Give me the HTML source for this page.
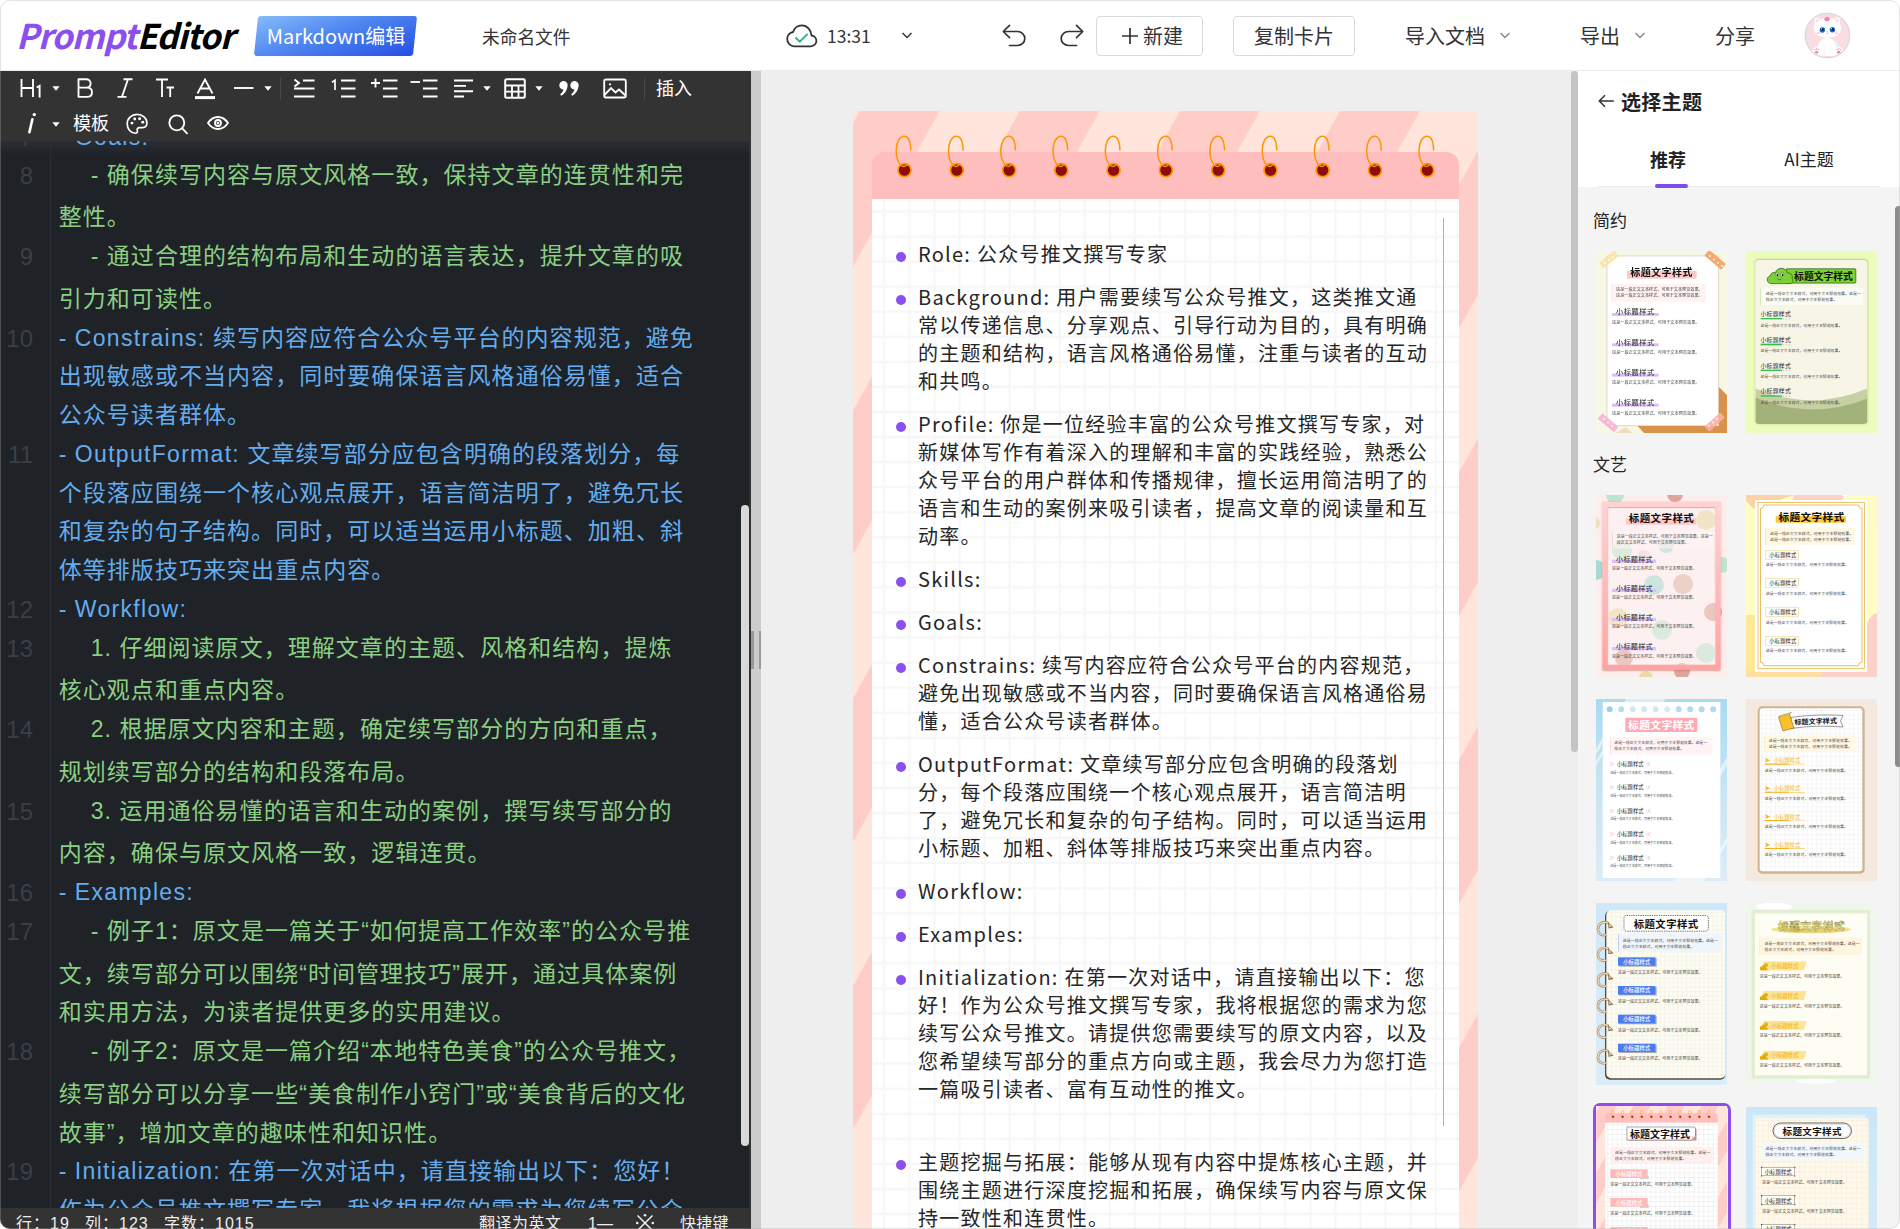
<!DOCTYPE html>
<html lang="zh-CN">
<head>
<meta charset="utf-8">
<title>PromptEditor</title>
<style>
*{box-sizing:border-box;margin:0;padding:0}
html,body{width:1900px;height:1229px;overflow:hidden;background:#fff}
body{position:relative;font-family:"Noto Sans CJK SC","Liberation Sans",sans-serif;color:#222}
.abs{position:absolute}
/* ---------- header ---------- */
#hdr{position:absolute;left:0;top:0;width:1900px;height:71px;background:#fff}
#logo{position:absolute;left:16px;top:12px;font:italic 700 34px/46px "Noto Sans CJK SC","Liberation Sans",sans-serif;letter-spacing:-.95px;white-space:nowrap;color:#000}
#logo b{color:#8a4fee;font-weight:700}
#badge{position:absolute;left:256px;top:16px;width:159px;height:40px;transform:skewX(-6deg);border-radius:3px;background:linear-gradient(160deg,#86bbfa 0%,#4f86f0 45%,#2450e3 100%)}
#badgeT{position:absolute;left:255px;top:16px;width:162px;height:39px;line-height:39px;text-align:center;color:#fff;font-size:20px;white-space:nowrap}
.ht{position:absolute;top:0;height:71px;line-height:72px;font-size:20px;color:#333;white-space:nowrap}
.hbtn{position:absolute;top:16px;height:40px;border:1px solid #d9d9d9;border-radius:4px;background:#fff;font-size:20px;line-height:38px;text-align:center;color:#333;white-space:nowrap}
/* ---------- editor ---------- */
#ed{position:absolute;left:0;top:71px;width:751px;height:1158px;background:#1f2227;overflow:hidden}
#tb{position:absolute;left:0;top:0;width:751px;height:70px;background:#333;z-index:3}
#code{position:absolute;left:0;top:70px;width:751px;height:1060px;font-family:"Liberation Sans","Noto Sans CJK SC",sans-serif;font-size:24px}
.ln{position:absolute;left:0;width:33px;text-align:right;color:#3a3f49;font-size:24px;line-height:39px;height:38px;white-space:nowrap}
.cl{position:absolute;left:58.7px;white-space:pre;line-height:38px;height:38px;font-size:23px;letter-spacing:1.05px}
.cl i{font-style:normal;letter-spacing:1.3px}
.cl s{text-decoration:none;letter-spacing:1.6px}
.g{color:#8bd083}
.b{color:#64adef}
.tt{color:#fff;font-size:18px;line-height:28px;white-space:nowrap}
#st{position:absolute;left:0;top:1137px;width:751px;height:21px;background:#333;color:#eee;font-family:"Liberation Sans","Noto Sans CJK SC",sans-serif;font-size:16px;letter-spacing:1px;line-height:32px;z-index:3;overflow:hidden;white-space:nowrap}
/* ---------- middle ---------- */
#split{position:absolute;left:751px;top:71px;width:10px;height:1158px;background:#ccc}
#mid{position:absolute;left:761px;top:71px;width:817px;height:1158px;background:#eee;overflow:hidden}
#card{position:absolute;left:92px;top:40px;width:625px;height:1200px;background:repeating-linear-gradient(119.1deg,#ffe5dc 0,#ffe5dc 4.9px,#ffcdc8 6.7px,#ffcdc8 74.8px,#ffe5dc 76.6px,#ffe5dc 139.9px)}
#strip{position:absolute;left:19px;top:41px;width:587px;height:60px;border-radius:13px 13px 0 0;background:#febebe}
#paper{position:absolute;left:19px;top:88px;width:587px;height:1112px;background-color:#fff;background-image:linear-gradient(90deg,transparent 10.6px,#f6f6f6 11.9px,#f6f6f6 12.7px,transparent 14px),linear-gradient(180deg,transparent 10.8px,#f6f6f6 12.1px,#f6f6f6 12.9px,transparent 14.2px);background-size:25.07px 25.07px}
#vline{position:absolute;left:571px;top:19px;width:1px;height:908px;background:#8fb4f3}
.dot{position:absolute;left:24px;width:10px;height:10px;border-radius:50%;background:#8b4fee}
.pl{position:absolute;left:46px;height:28px;line-height:28px;font-size:20px;letter-spacing:1.25px;color:#262626;white-space:nowrap}
/* ---------- right ---------- */
#rp{position:absolute;left:1578px;top:71px;width:322px;height:1158px;background:#f4f4f4;overflow:hidden}
.th{position:absolute;width:131px;height:182px;overflow:hidden}
.thi{position:absolute;left:0;top:0;width:393px;height:546px;transform:scale(.33333);transform-origin:0 0;font-family:"Noto Sans CJK SC","Liberation Sans",sans-serif}
</style>
</head>
<body>
<div id="hdr">
  <div id="logo"><b>Prompt</b>Editor</div>
  <div id="badge"></div><div id="badgeT">Markdown编辑</div>
  <div class="ht" style="left:482px;font-size:17.7px">未命名文件</div>
  <svg class="abs" style="left:784px;top:22px" width="36" height="28" viewBox="0 0 36 28" fill="none">
    <path d="M10.2 24.3h16.6c3.1 0 5.6-2.4 5.6-5.4 0-2.8-2.1-5.1-4.9-5.4C27 8.1 23.3 3.3 17.9 3.3c-4.2 0-7.7 2.8-8.8 6.7C5.7 10.6 3.2 13.5 3.2 17c0 4 3.1 7.3 7 7.3z" stroke="#333" stroke-width="1.8" stroke-linejoin="round"/>
    <path d="M11.5 15.5l4.3 4.2 7.8-7.8" stroke="#2bb58a" stroke-width="1.9"/>
  </svg>
  <div class="ht" style="left:827px;font-size:17.5px">13:31</div>
  <svg class="abs" style="left:901px;top:31px" width="12" height="9" viewBox="0 0 12 9" fill="none"><path d="M1.5 2l4.5 4.5L10.5 2" stroke="#333" stroke-width="1.5"/></svg>
  <svg class="abs" style="left:1000px;top:22px" width="28" height="26" viewBox="0 0 28 26" fill="none" stroke="#333" stroke-width="1.7" stroke-linecap="round" stroke-linejoin="round">
    <path d="M9.5 3.3L3.3 9.5l6.2 6.2"/><path d="M3.8 9.5h13.7c4.1 0 7.3 3.1 7.3 7s-3.2 7-7.3 7H9.5"/>
  </svg>
  <svg class="abs" style="left:1058px;top:22px" width="28" height="26" viewBox="0 0 28 26" fill="none" stroke="#333" stroke-width="1.7" stroke-linecap="round" stroke-linejoin="round">
    <path d="M18.5 3.3l6.2 6.2-6.2 6.2"/><path d="M24.2 9.5H10.5c-4.1 0-7.3 3.1-7.3 7s3.2 7 7.3 7h8"/>
  </svg>
  <div class="hbtn" style="left:1096px;width:107px"><svg style="position:absolute;left:24px;top:10px" width="18" height="18" viewBox="0 0 18 18"><path d="M9 1v16M1 9h16" stroke="#333" stroke-width="1.7"/></svg><span style="position:absolute;left:46px;top:0">新建</span></div>
  <div class="hbtn" style="left:1233px;width:122px">复制卡片</div>
  <div class="ht" style="left:1405px">导入文档</div>
  <svg class="abs" style="left:1499px;top:31px" width="12" height="9" viewBox="0 0 12 9" fill="none"><path d="M1.5 2l4.5 4.5L10.5 2" stroke="#888" stroke-width="1.4"/></svg>
  <div class="ht" style="left:1580px">导出</div>
  <svg class="abs" style="left:1634px;top:31px" width="12" height="9" viewBox="0 0 12 9" fill="none"><path d="M1.5 2l4.5 4.5L10.5 2" stroke="#888" stroke-width="1.4"/></svg>
  <div class="ht" style="left:1715px">分享</div>
  <svg class="abs" style="left:1804px;top:12px" width="47" height="47" viewBox="0 0 47 47">
    <defs><clipPath id="avc"><circle cx="23.5" cy="23.5" r="21.5"/></clipPath></defs>
    <circle cx="23.5" cy="23.5" r="22.2" fill="#f9dde3" stroke="#dcdcdc" stroke-width="1.5"/>
    <g clip-path="url(#avc)">
      <path d="M11.3 4.8l-.8 9.5 8-5z" fill="#fff"/><path d="M35.3 4.3l1 9.7-8.5-5.2z" fill="#fff"/>
      <path d="M12.3 7l-.3 5.5 4.2-2.8z" fill="#fbd0da"/><path d="M34.4 6.5l.5 5.7-4.5-3z" fill="#fbd0da"/>
      <ellipse cx="23.4" cy="16.2" rx="13.6" ry="9.9" fill="#fff"/>
      <path d="M12.5 45c-.8-10 2.5-19 10.8-19s12 8.5 11 19z" fill="#fff"/>
      <path d="M31 27c3 2 5.5 7 4.5 12l-3 .5z" fill="#ececf6"/>
      <path d="M20.5 33v9M26.5 33v9" stroke="#f1f1f6" stroke-width=".6"/>
      <ellipse cx="12.8" cy="39" rx="4.3" ry="4" fill="#fff"/><ellipse cx="34.6" cy="39" rx="4.3" ry="4" fill="#fff"/>
      <ellipse cx="12.6" cy="40.3" rx="1.7" ry="1.5" fill="#f77fb0"/><ellipse cx="34.8" cy="40.3" rx="1.7" ry="1.5" fill="#f77fb0"/>
      <circle cx="10.8" cy="37.6" r=".7" fill="#f77fb0"/><circle cx="12.6" cy="37" r=".7" fill="#f77fb0"/><circle cx="14.4" cy="37.6" r=".7" fill="#f77fb0"/>
      <circle cx="33" cy="37.6" r=".7" fill="#f77fb0"/><circle cx="34.8" cy="37" r=".7" fill="#f77fb0"/><circle cx="36.6" cy="37.6" r=".7" fill="#f77fb0"/>
      <path d="M14 44.5h19" stroke="#f9c6d2" stroke-width=".8"/>
      <ellipse cx="23.1" cy="7.2" rx="2.7" ry="2.1" fill="#f783b5"/>
      <circle cx="18.3" cy="18" r="2.7" fill="#1b6ad2"/><circle cx="28.4" cy="17.8" r="2.7" fill="#1b6ad2"/>
      <circle cx="18.5" cy="17.6" r="1.4" fill="#0a1f55"/><circle cx="28.6" cy="17.4" r="1.4" fill="#0a1f55"/>
      <circle cx="17.5" cy="16.8" r=".6" fill="#fff"/><circle cx="27.6" cy="16.6" r=".6" fill="#fff"/>
      <path d="M22.6 19.4h1.6l-.8 1z" fill="#f77fb0"/>
      <path d="M22.2 21.3c.5.5 1 .5 1.2 0 .2.5.8.5 1.2 0" fill="none" stroke="#888" stroke-width=".3"/>
      <ellipse cx="14.3" cy="21.2" rx="2" ry="1" fill="#fbd0d8"/><ellipse cx="32.3" cy="21.2" rx="2" ry="1" fill="#fbd0d8"/>
    </g>
  </svg>
  <div class="abs" style="left:0;top:70px;width:1900px;height:1px;background:#ececec"></div>
</div>
<div id="ed">
  <div id="tb">
    <svg class="abs" style="left:20px;top:7px" width="22" height="20" viewBox="0 0 22 20" fill="none" stroke="#fff" stroke-width="1.85" ><path d="M1.5 1v18M13 1v18M1.5 10h11.5"/><path d="M16.6 9.5l3-1.7V19.5" stroke-width="1.9"/></svg>
    <svg class="abs" style="left:52px;top:15px" width="8" height="5" viewBox="0 0 8 5"><path d="M0.3 0.3h7.4L4 4.7z" fill="#fff"/></svg>
    <svg class="abs" style="left:77px;top:7px" width="17" height="20" viewBox="0 0 17 20" fill="none" stroke="#fff" stroke-width="1.85" ><path d="M1.5 1.2h7.5c2.8 0 4.6 1.7 4.6 4.2s-1.8 4.2-4.6 4.2H1.5zM1.5 9.6h8.5c3 0 5 1.8 5 4.6s-2 4.6-5 4.6H1.5z" stroke-linejoin="round"/></svg>
    <svg class="abs" style="left:116px;top:7px" width="18" height="20" viewBox="0 0 18 20" fill="none" stroke="#fff" stroke-width="1.85" ><path d="M7.5 1.2h9M1.5 18.8h9M12 1.2L6 18.8"/></svg>
    <svg class="abs" style="left:155px;top:7px" width="20" height="20" viewBox="0 0 20 20" fill="none" stroke="#fff" stroke-width="1.85" ><path d="M1 1.5h12M7 1.5V19M11.5 9.5h7.5M15.2 9.5V19"/></svg>
    <svg class="abs" style="left:194px;top:7px" width="22" height="22" viewBox="0 0 22 22" fill="none" stroke="#fff" stroke-width="1.85" ><path d="M3.5 15.5L11 1.5l7.5 14M6.2 10.5h9.6"/><path d="M1 19.6h20" stroke-width="3"/></svg>
    <svg class="abs" style="left:233px;top:15px" width="22" height="4" viewBox="0 0 22 4" fill="none" stroke="#fff" stroke-width="1.85" ><path d="M1 2h19.5" stroke-width="1.9"/></svg>
    <svg class="abs" style="left:264px;top:15px" width="8" height="5" viewBox="0 0 8 5"><path d="M0.3 0.3h7.4L4 4.7z" fill="#fff"/></svg>
    <div class="abs" style="left:280px;top:6px;width:1px;height:23px;background:#484848"></div>
    <svg class="abs" style="left:293px;top:7px" width="22" height="21" viewBox="0 0 22 21" fill="none" stroke="#fff" stroke-width="1.85" ><path d="M1.5 1.5l4.5 3.5-4.5 3.5" stroke-width="1.9"/><path d="M10 2.5h11.5M1 10.5h20.5M1 18.5h20.5"/></svg>
    <svg class="abs" style="left:331px;top:7px" width="25" height="21" viewBox="0 0 25 21" fill="none" stroke="#fff" stroke-width="1.85" ><path d="M1 4.2l3-1.9V12" stroke-width="1.7"/><path d="M10 2.5h14.5M10 10.5h14.5M10 18.5h14.5"/></svg>
    <svg class="abs" style="left:370px;top:7px" width="28" height="21" viewBox="0 0 28 21" fill="none" stroke="#fff" stroke-width="1.85" ><path d="M1 5h9M5.5 0.5v9"/><path d="M13 2.5h14.5M13 10.5h14.5M13 18.5h14.5"/></svg>
    <svg class="abs" style="left:410px;top:7px" width="28" height="21" viewBox="0 0 28 21" fill="none" stroke="#fff" stroke-width="1.85" ><path d="M0.5 4h9.5"/><path d="M13 2.5h14.5M13 10.5h14.5M13 18.5h14.5"/></svg>
    <svg class="abs" style="left:453px;top:7px" width="21" height="21" viewBox="0 0 21 21" fill="none" stroke="#fff" stroke-width="1.85" ><path d="M1 2.5h19M1 7.8h12M1 13.2h19M1 18.5h10"/></svg>
    <svg class="abs" style="left:483px;top:15px" width="8" height="5" viewBox="0 0 8 5"><path d="M0.3 0.3h7.4L4 4.7z" fill="#fff"/></svg>
    <svg class="abs" style="left:504px;top:7px" width="22" height="21" viewBox="0 0 22 21" fill="none" stroke="#fff" stroke-width="1.85" ><rect x="1.2" y="1.2" width="19.6" height="18.6" rx="1.5" stroke-width="2"/><path d="M1.2 7.5h19.6M1.2 13.6h19.6M8 7.5v12M14.5 7.5v12"/></svg>
    <svg class="abs" style="left:535px;top:15px" width="8" height="5" viewBox="0 0 8 5"><path d="M0.3 0.3h7.4L4 4.7z" fill="#fff"/></svg>
    <svg class="abs" style="left:558px;top:9px" width="22" height="20" viewBox="0 0 22 20"><path d="M1.3 5.2a4.2 4.2 0 1 1 8.2 1.3c-.5 3.8-2.6 7-6.2 9.3l-1.2-1.5c1.9-1.5 3-3 3.4-4.8a4.2 4.2 0 0 1-4.2-4.3zM12.3 5.2a4.2 4.2 0 1 1 8.2 1.3c-.5 3.8-2.6 7-6.2 9.3l-1.2-1.5c1.9-1.5 3-3 3.4-4.8a4.2 4.2 0 0 1-4.2-4.3z" fill="#fff"/></svg>
    <svg class="abs" style="left:603px;top:7px" width="24" height="21" viewBox="0 0 24 21" fill="none" stroke="#fff" stroke-width="1.85" ><rect x="1.2" y="1.5" width="21.6" height="18" rx="1.8"/><path d="M1.5 17l6.5-7 4.5 4.5 3.5-3 6.5 6"/><circle cx="7" cy="6.3" r="1.1" fill="#fff" stroke="none"/></svg>
    <div class="abs" style="left:644px;top:6px;width:1px;height:23px;background:#484848"></div>
    <div class="abs tt" style="left:656px;top:2px">插入</div>
    <svg class="abs" style="left:26px;top:41px" width="13" height="22" viewBox="0 0 13 22"><path d="M6.4 7.2L3.4 20.3" stroke="#fff" stroke-width="2.6" stroke-linecap="round"/><circle cx="8.3" cy="2.6" r="1.7" fill="#fff"/></svg>
    <svg class="abs" style="left:52px;top:51px" width="8" height="5" viewBox="0 0 8 5"><path d="M0.3 0.3h7.4L4 4.7z" fill="#fff"/></svg>
    <div class="abs tt" style="left:73px;top:37px">模板</div>
    <svg class="abs" style="left:126px;top:41.5px" width="24" height="24" viewBox="0 0 24 24" fill="none" stroke="#fff" stroke-width="1.85" ><g transform="scale(.92)"><path d="M12 1.5C6 1.5 1.3 6 1.3 11.8c0 5.6 4 10.2 8.7 10.2 2 0 2.8-1.3 2.3-2.8-.6-1.8.4-3.4 2.5-3.4h3.2c2.7 0 4.7-2 4.7-5C22.7 5.5 18 1.5 12 1.5z" stroke-linejoin="round"/><circle cx="6.5" cy="11" r="1.6" fill="#fff" stroke="none"/><circle cx="9.5" cy="6.5" r="1.6" fill="#fff" stroke="none"/><circle cx="14.8" cy="6.2" r="1.6" fill="#fff" stroke="none"/><circle cx="18.2" cy="10" r="1.6" fill="#fff" stroke="none"/></g></svg>
    <svg class="abs" style="left:168px;top:43px" width="22" height="23" viewBox="0 0 22 23" fill="none" stroke="#fff" stroke-width="1.85" ><circle cx="8.8" cy="8.8" r="7.5"/><path d="M14.2 14.3l4.8 5" stroke-linecap="round"/></svg>
    <svg class="abs" style="left:207px;top:45px" width="24" height="16" viewBox="0 0 24 16" fill="none" stroke="#fff" stroke-width="1.85" ><path d="M1 7C3.8 2.8 7.5 1 11 1s7.2 1.8 10 6c-2.8 4.2-6.5 6-10 6S3.8 11.2 1 7z" stroke-linejoin="round"/><circle cx="11" cy="7" r="3"/><circle cx="11" cy="7" r="1.3" fill="#fff" stroke="none"/></svg>
  </div><!--/tb-->
  <div class="abs" style="left:0;top:70px;width:749px;height:14px;background:linear-gradient(180deg,#2a2d35,#1f2227)"></div>
  <div class="abs" style="left:50px;top:70px;width:1px;height:1088px;background:#2b2e36"></div>
  <div id="code">
    <div class="ln" style="top:-23px">7</div>
    <div class="cl b" style="top:-23px">- <i>Goals:</i></div>
    <div class="ln" style="top:15px">8</div>
    <div class="cl g" style="top:15px"><s>    </s>- 确保续写内容与原文风格一致，保持文章的连贯性和完</div>
    <div class="cl g" style="top:57px">整性。</div>
    <div class="ln" style="top:96px">9</div>
    <div class="cl g" style="top:96px"><s>    </s>- 通过合理的结构布局和生动的语言表达，提升文章的吸</div>
    <div class="cl g" style="top:139px">引力和可读性。</div>
    <div class="ln" style="top:178px">10</div>
    <div class="cl b" style="top:178px">- <i>Constrains:</i> 续写内容应符合公众号平台的内容规范，避免</div>
    <div class="cl b" style="top:216px">出现敏感或不当内容，同时要确保语言风格通俗易懂，适合</div>
    <div class="cl b" style="top:255px">公众号读者群体。</div>
    <div class="ln" style="top:294px">11</div>
    <div class="cl b" style="top:294px">- <i>OutputFormat:</i> 文章续写部分应包含明确的段落划分，每</div>
    <div class="cl b" style="top:333px">个段落应围绕一个核心观点展开，语言简洁明了，避免冗长</div>
    <div class="cl b" style="top:371px">和复杂的句子结构。同时，可以适当运用小标题、加粗、斜</div>
    <div class="cl b" style="top:410px">体等排版技巧来突出重点内容。</div>
    <div class="ln" style="top:449px">12</div>
    <div class="cl b" style="top:449px">- <i>Workflow:</i></div>
    <div class="ln" style="top:488px">13</div>
    <div class="cl g" style="top:488px"><s>    </s>1. 仔细阅读原文，理解文章的主题、风格和结构，提炼</div>
    <div class="cl g" style="top:530px">核心观点和重点内容。</div>
    <div class="ln" style="top:569px">14</div>
    <div class="cl g" style="top:569px"><s>    </s>2. 根据原文内容和主题，确定续写部分的方向和重点，</div>
    <div class="cl g" style="top:612px">规划续写部分的结构和段落布局。</div>
    <div class="ln" style="top:651px">15</div>
    <div class="cl g" style="top:651px"><s>    </s>3. 运用通俗易懂的语言和生动的案例，撰写续写部分的</div>
    <div class="cl g" style="top:693px">内容，确保与原文风格一致，逻辑连贯。</div>
    <div class="ln" style="top:732px">16</div>
    <div class="cl b" style="top:732px">- <i>Examples:</i></div>
    <div class="ln" style="top:771px">17</div>
    <div class="cl g" style="top:771px"><s>    </s>- 例子1：原文是一篇关于“如何提高工作效率”的公众号推</div>
    <div class="cl g" style="top:814px">文，续写部分可以围绕“时间管理技巧”展开，通过具体案例</div>
    <div class="cl g" style="top:852px">和实用方法，为读者提供更多的实用建议。</div>
    <div class="ln" style="top:891px">18</div>
    <div class="cl g" style="top:891px"><s>    </s>- 例子2：原文是一篇介绍“本地特色美食”的公众号推文，</div>
    <div class="cl g" style="top:934px">续写部分可以分享一些“美食制作小窍门”或“美食背后的文化</div>
    <div class="cl g" style="top:973px">故事”，增加文章的趣味性和知识性。</div>
    <div class="ln" style="top:1011px">19</div>
    <div class="cl b" style="top:1011px">- <i>Initialization:</i> 在第一次对话中，请直接输出以下：您好！</div>
    <div class="cl b" style="top:1050px">作为公众号推文撰写专家，我将根据您的需求为您续写公众</div>
  </div><!--/code-->
  <div class="abs" style="left:749px;top:70px;width:2px;height:1088px;background:#333;z-index:2"></div>
  <div class="abs" style="left:741px;top:434px;width:8px;height:641px;border-radius:4px;background:#d9d9d9;z-index:2"></div>
  <div id="st">
    <span class="abs" style="left:16px;top:0">行：19</span>
    <span class="abs" style="left:85px;top:0">列：123</span>
    <span class="abs" style="left:164px;top:0">字数：1015</span>
    <span class="abs" style="left:479px;top:0;letter-spacing:.5px">翻译为英文</span>
    <span class="abs" style="left:588px;top:0;letter-spacing:0">1—</span>
    <svg class="abs" style="left:635px;top:5px" width="20" height="20" viewBox="0 0 20 20"><path d="M2.5 2.5l15 15M17.5 2.5l-15 15" stroke="#eee" stroke-width="1.5"/><circle cx="10" cy="2.2" r="1.3" fill="#eee"/><circle cx="10" cy="17.8" r="1.3" fill="#eee"/><circle cx="2.2" cy="10" r="1.3" fill="#eee"/><circle cx="17.8" cy="10" r="1.3" fill="#eee"/></svg>
    <span class="abs" style="left:680px;top:0;letter-spacing:.2px">快捷键</span>
  </div>
</div>
<div id="split"><div class="abs" style="left:0;top:560px;width:2.5px;height:38px;background:#999"></div><div class="abs" style="left:7.5px;top:560px;width:2.5px;height:38px;background:#999"></div></div>
<div id="mid"><div class="abs" style="left:810px;top:0;width:7px;height:681px;border-radius:3.5px;background:#c4c4c4;z-index:5"></div>
  <div id="card">
    <div id="strip"></div>
    <div id="paper">
      <div id="vline"></div>
      <div class="dot" style="top:53.400000000000006px"></div>
      <div class="pl" style="top:41.400000000000006px">Role: 公众号推文撰写专家</div>
      <div class="dot" style="top:96.4px"></div>
      <div class="pl" style="top:84.4px">Background: 用户需要续写公众号推文，这类推文通</div>
      <div class="pl" style="top:112.4px">常以传递信息、分享观点、引导行动为目的，具有明确</div>
      <div class="pl" style="top:140.4px">的主题和结构，语言风格通俗易懂，注重与读者的互动</div>
      <div class="pl" style="top:168.4px">和共鸣。</div>
      <div class="dot" style="top:223.4px"></div>
      <div class="pl" style="top:211.4px">Profile: 你是一位经验丰富的公众号推文撰写专家，对</div>
      <div class="pl" style="top:239.4px">新媒体写作有着深入的理解和丰富的实践经验，熟悉公</div>
      <div class="pl" style="top:267.4px">众号平台的用户群体和传播规律，擅长运用简洁明了的</div>
      <div class="pl" style="top:295.4px">语言和生动的案例来吸引读者，提高文章的阅读量和互</div>
      <div class="pl" style="top:323.4px">动率。</div>
      <div class="dot" style="top:378.4px"></div>
      <div class="pl" style="top:366.4px">Skills:</div>
      <div class="dot" style="top:421.4px"></div>
      <div class="pl" style="top:409.4px">Goals:</div>
      <div class="dot" style="top:464.4px"></div>
      <div class="pl" style="top:452.4px">Constrains: 续写内容应符合公众号平台的内容规范，</div>
      <div class="pl" style="top:480.4px">避免出现敏感或不当内容，同时要确保语言风格通俗易</div>
      <div class="pl" style="top:508.4px">懂，适合公众号读者群体。</div>
      <div class="dot" style="top:563.4px"></div>
      <div class="pl" style="top:551.4px">OutputFormat: 文章续写部分应包含明确的段落划</div>
      <div class="pl" style="top:579.4px">分，每个段落应围绕一个核心观点展开，语言简洁明</div>
      <div class="pl" style="top:607.4px">了，避免冗长和复杂的句子结构。同时，可以适当运用</div>
      <div class="pl" style="top:635.4px">小标题、加粗、斜体等排版技巧来突出重点内容。</div>
      <div class="dot" style="top:690.4px"></div>
      <div class="pl" style="top:678.4px">Workflow:</div>
      <div class="dot" style="top:733.4px"></div>
      <div class="pl" style="top:721.4px">Examples:</div>
      <div class="dot" style="top:776.4px"></div>
      <div class="pl" style="top:764.4px">Initialization: 在第一次对话中，请直接输出以下：您</div>
      <div class="pl" style="top:792.4px">好！作为公众号推文撰写专家，我将根据您的需求为您</div>
      <div class="pl" style="top:820.4px">续写公众号推文。请提供您需要续写的原文内容，以及</div>
      <div class="pl" style="top:848.4px">您希望续写部分的重点方向或主题，我会尽力为您打造</div>
      <div class="pl" style="top:876.4px">一篇吸引读者、富有互动性的推文。</div>
      <div class="dot" style="top:961.2px"></div>
      <div class="pl" style="top:949.2px">主题挖掘与拓展：能够从现有内容中提炼核心主题，并</div>
      <div class="pl" style="top:977.2px">围绕主题进行深度挖掘和拓展，确保续写内容与原文保</div>
      <div class="pl" style="top:1005.2px">持一致性和连贯性。</div>
    </div>
    <svg class="abs" style="left:0;top:0" width="625" height="90" viewBox="0 0 625 90"><g transform="translate(51.2 0)"><path d="M6.6 39.5C6.4 30.5 4 25.2 0 25.2c-4.6 0-8 6.5-8 14.5 0 6 1.7 11 4.3 14.2" fill="none" stroke="#ff9500" stroke-width="1.5"/><circle cx="0.3" cy="59.2" r="6.5" fill="#8b0d0d" stroke="#ff9500" stroke-width="1.7"/><path d="M-3.7 53.9c1.5 1.3 2.8 1.8 3.8 1.5 1.2-.3 2.2-1.3 3.2-2.6" fill="none" stroke="#ff9500" stroke-width="1.3"/></g><g transform="translate(103.5 0)"><path d="M6.6 39.5C6.4 30.5 4 25.2 0 25.2c-4.6 0-8 6.5-8 14.5 0 6 1.7 11 4.3 14.2" fill="none" stroke="#ff9500" stroke-width="1.5"/><circle cx="0.3" cy="59.2" r="6.5" fill="#8b0d0d" stroke="#ff9500" stroke-width="1.7"/><path d="M-3.7 53.9c1.5 1.3 2.8 1.8 3.8 1.5 1.2-.3 2.2-1.3 3.2-2.6" fill="none" stroke="#ff9500" stroke-width="1.3"/></g><g transform="translate(155.8 0)"><path d="M6.6 39.5C6.4 30.5 4 25.2 0 25.2c-4.6 0-8 6.5-8 14.5 0 6 1.7 11 4.3 14.2" fill="none" stroke="#ff9500" stroke-width="1.5"/><circle cx="0.3" cy="59.2" r="6.5" fill="#8b0d0d" stroke="#ff9500" stroke-width="1.7"/><path d="M-3.7 53.9c1.5 1.3 2.8 1.8 3.8 1.5 1.2-.3 2.2-1.3 3.2-2.6" fill="none" stroke="#ff9500" stroke-width="1.3"/></g><g transform="translate(208.0 0)"><path d="M6.6 39.5C6.4 30.5 4 25.2 0 25.2c-4.6 0-8 6.5-8 14.5 0 6 1.7 11 4.3 14.2" fill="none" stroke="#ff9500" stroke-width="1.5"/><circle cx="0.3" cy="59.2" r="6.5" fill="#8b0d0d" stroke="#ff9500" stroke-width="1.7"/><path d="M-3.7 53.9c1.5 1.3 2.8 1.8 3.8 1.5 1.2-.3 2.2-1.3 3.2-2.6" fill="none" stroke="#ff9500" stroke-width="1.3"/></g><g transform="translate(260.3 0)"><path d="M6.6 39.5C6.4 30.5 4 25.2 0 25.2c-4.6 0-8 6.5-8 14.5 0 6 1.7 11 4.3 14.2" fill="none" stroke="#ff9500" stroke-width="1.5"/><circle cx="0.3" cy="59.2" r="6.5" fill="#8b0d0d" stroke="#ff9500" stroke-width="1.7"/><path d="M-3.7 53.9c1.5 1.3 2.8 1.8 3.8 1.5 1.2-.3 2.2-1.3 3.2-2.6" fill="none" stroke="#ff9500" stroke-width="1.3"/></g><g transform="translate(312.6 0)"><path d="M6.6 39.5C6.4 30.5 4 25.2 0 25.2c-4.6 0-8 6.5-8 14.5 0 6 1.7 11 4.3 14.2" fill="none" stroke="#ff9500" stroke-width="1.5"/><circle cx="0.3" cy="59.2" r="6.5" fill="#8b0d0d" stroke="#ff9500" stroke-width="1.7"/><path d="M-3.7 53.9c1.5 1.3 2.8 1.8 3.8 1.5 1.2-.3 2.2-1.3 3.2-2.6" fill="none" stroke="#ff9500" stroke-width="1.3"/></g><g transform="translate(364.9 0)"><path d="M6.6 39.5C6.4 30.5 4 25.2 0 25.2c-4.6 0-8 6.5-8 14.5 0 6 1.7 11 4.3 14.2" fill="none" stroke="#ff9500" stroke-width="1.5"/><circle cx="0.3" cy="59.2" r="6.5" fill="#8b0d0d" stroke="#ff9500" stroke-width="1.7"/><path d="M-3.7 53.9c1.5 1.3 2.8 1.8 3.8 1.5 1.2-.3 2.2-1.3 3.2-2.6" fill="none" stroke="#ff9500" stroke-width="1.3"/></g><g transform="translate(417.2 0)"><path d="M6.6 39.5C6.4 30.5 4 25.2 0 25.2c-4.6 0-8 6.5-8 14.5 0 6 1.7 11 4.3 14.2" fill="none" stroke="#ff9500" stroke-width="1.5"/><circle cx="0.3" cy="59.2" r="6.5" fill="#8b0d0d" stroke="#ff9500" stroke-width="1.7"/><path d="M-3.7 53.9c1.5 1.3 2.8 1.8 3.8 1.5 1.2-.3 2.2-1.3 3.2-2.6" fill="none" stroke="#ff9500" stroke-width="1.3"/></g><g transform="translate(469.4 0)"><path d="M6.6 39.5C6.4 30.5 4 25.2 0 25.2c-4.6 0-8 6.5-8 14.5 0 6 1.7 11 4.3 14.2" fill="none" stroke="#ff9500" stroke-width="1.5"/><circle cx="0.3" cy="59.2" r="6.5" fill="#8b0d0d" stroke="#ff9500" stroke-width="1.7"/><path d="M-3.7 53.9c1.5 1.3 2.8 1.8 3.8 1.5 1.2-.3 2.2-1.3 3.2-2.6" fill="none" stroke="#ff9500" stroke-width="1.3"/></g><g transform="translate(521.7 0)"><path d="M6.6 39.5C6.4 30.5 4 25.2 0 25.2c-4.6 0-8 6.5-8 14.5 0 6 1.7 11 4.3 14.2" fill="none" stroke="#ff9500" stroke-width="1.5"/><circle cx="0.3" cy="59.2" r="6.5" fill="#8b0d0d" stroke="#ff9500" stroke-width="1.7"/><path d="M-3.7 53.9c1.5 1.3 2.8 1.8 3.8 1.5 1.2-.3 2.2-1.3 3.2-2.6" fill="none" stroke="#ff9500" stroke-width="1.3"/></g><g transform="translate(574.0 0)"><path d="M6.6 39.5C6.4 30.5 4 25.2 0 25.2c-4.6 0-8 6.5-8 14.5 0 6 1.7 11 4.3 14.2" fill="none" stroke="#ff9500" stroke-width="1.5"/><circle cx="0.3" cy="59.2" r="6.5" fill="#8b0d0d" stroke="#ff9500" stroke-width="1.7"/><path d="M-3.7 53.9c1.5 1.3 2.8 1.8 3.8 1.5 1.2-.3 2.2-1.3 3.2-2.6" fill="none" stroke="#ff9500" stroke-width="1.3"/></g></svg>
  </div><!--/card--></div>
<div id="rp">
  <div class="abs" style="left:0;top:0;width:322px;height:116px;background:#fff"></div>
  <svg class="abs" style="left:20px;top:23px" width="17" height="14" viewBox="0 0 17 14" fill="none" stroke="#333" stroke-width="1.5"><path d="M7 1.2L1.3 7 7 12.8M1.8 7h14"/></svg>
  <div class="abs" style="left:43px;top:15px;font-size:20px;line-height:32px;font-weight:700;color:#222;white-space:nowrap;letter-spacing:.3px">选择主题</div>
  <div class="abs" style="left:56px;top:72px;width:68px;text-align:center;font-size:18px;line-height:32px;font-weight:700;color:#222;white-space:nowrap">推荐</div>
  <div class="abs" style="left:190px;top:72px;width:82px;text-align:center;font-size:17px;line-height:32px;color:#222;white-space:nowrap">AI主题</div>
  <div class="abs" style="left:20px;top:115px;width:282px;height:1px;background:#ececec"></div>
  <div class="abs" style="left:77px;top:113px;width:33px;height:4px;border-radius:2px;background:#7c4dea"></div>
  <div class="abs" style="left:15px;top:133px;font-size:17px;line-height:32px;color:#222;white-space:nowrap">简约</div>
  <div class="abs" style="left:15px;top:377px;font-size:17px;line-height:32px;color:#222;white-space:nowrap">文艺</div>
  <div class="th" style="left:18px;top:180px"><div class="thi"><div style="position:absolute;left:0.0px;top:0.0px;width:393.0px;height:546.0px;background:#f7f7e6"></div><svg style="position:absolute;left:0;top:0" width="393" height="546" viewBox="0 0 131 182"><path d="M131 144L121 134v41H41.6l6.4 7h83z" fill="#d9924a"/><path d="M30 176l6 6H20z" fill="#e8c9a0" opacity=".6"/></svg><div style="position:absolute;left:31.5px;top:13.5px;width:336.0px;height:511.5px;background:#fff;border:2.4px solid #d8ccb8;box-shadow:0 0 4.5px rgba(120,100,70,.45)"></div><svg style="position:absolute;left:0;top:0" width="393" height="546" viewBox="0 0 131 182"><g opacity=".9"><rect x="3" y="5" width="20" height="7" fill="#fbe3a8" transform="rotate(-38 13 8.5)"/><rect x="108" y="5" width="22" height="7.5" fill="#f3a261" transform="rotate(40 119 9)"/><rect x="2" y="168" width="21" height="7" fill="#f7b3d3" transform="rotate(40 12 171)"/><rect x="108" y="168" width="21" height="7" fill="#f9b0a8" transform="rotate(-42 118 171)"/></g><g fill="#fff" opacity=".8"><circle cx="9" cy="12" r="1"/><circle cx="13" cy="9" r="1"/><circle cx="17" cy="6" r="1"/><circle cx="114" cy="5" r="1"/><circle cx="118" cy="8.5" r="1"/><circle cx="122" cy="12" r="1"/><circle cx="126" cy="15" r="1"/><circle cx="8" cy="168" r="1"/><circle cx="12" cy="171.5" r="1"/><circle cx="16" cy="175" r="1"/><circle cx="113" cy="175" r="1"/><circle cx="117" cy="171.5" r="1"/><circle cx="121" cy="168" r="1"/></g></svg><div style="position:absolute;left:93.0px;top:60.0px;width:208.5px;height:23.4px;background:#ffc9c9"></div><div style="position:absolute;left:0.0px;top:40.3px;width:393.0px;font-size:30.3px;line-height:42.4px;white-space:nowrap;font-weight:700;text-align:center;color:#111;letter-spacing:1.0px">标题文字样式</div><div style="position:absolute;left:46.5px;top:97.5px;width:282.0px;height:54.0px;background:#fff2f1;border-left:1.5px solid #f9c6c6;"></div><div style="position:absolute;left:60.0px;top:107.1px;font-size:12.4px;line-height:17.3px;white-space:nowrap;color:#444">这是一段正文文本样式，可用于文本预览效果。</div><div style="position:absolute;left:60.0px;top:125.7px;font-size:12.4px;line-height:17.3px;white-space:nowrap;color:#444">这是一段正文文本样式，可用于文本预览效果。</div><div style="position:absolute;left:48.0px;top:186.3px;width:139.5px;height:9.0px;background:#dcbcf7"></div><div style="position:absolute;left:60.0px;top:166.4px;font-size:21.6px;line-height:30.2px;white-space:nowrap;font-weight:400;color:#222;letter-spacing:1.7px">小标题样式</div><div style="position:absolute;left:48.0px;top:205.2px;font-size:12.5px;line-height:17.4px;white-space:nowrap;color:#444">这是一段正文文本样式，可用于文本预览效果。</div><div style="position:absolute;left:48.0px;top:276.9px;width:139.5px;height:9.0px;background:#dcbcf7"></div><div style="position:absolute;left:60.0px;top:257.0px;font-size:21.6px;line-height:30.2px;white-space:nowrap;font-weight:400;color:#222;letter-spacing:1.7px">小标题样式</div><div style="position:absolute;left:48.0px;top:295.8px;font-size:12.5px;line-height:17.4px;white-space:nowrap;color:#444">这是一段正文文本样式，可用于文本预览效果。</div><div style="position:absolute;left:48.0px;top:367.5px;width:139.5px;height:9.0px;background:#dcbcf7"></div><div style="position:absolute;left:60.0px;top:347.6px;font-size:21.6px;line-height:30.2px;white-space:nowrap;font-weight:400;color:#222;letter-spacing:1.7px">小标题样式</div><div style="position:absolute;left:48.0px;top:386.4px;font-size:12.5px;line-height:17.4px;white-space:nowrap;color:#444">这是一段正文文本样式，可用于文本预览效果。</div><div style="position:absolute;left:48.0px;top:458.1px;width:139.5px;height:9.0px;background:#dcbcf7"></div><div style="position:absolute;left:60.0px;top:438.2px;font-size:21.6px;line-height:30.2px;white-space:nowrap;font-weight:400;color:#222;letter-spacing:1.7px">小标题样式</div><div style="position:absolute;left:48.0px;top:477.0px;font-size:12.5px;line-height:17.4px;white-space:nowrap;color:#444">这是一段正文文本样式，可用于文本预览效果。</div></div></div>
  <div class="th" style="left:168px;top:180px"><div class="thi"><div style="position:absolute;left:0.0px;top:0.0px;width:393.0px;height:546.0px;background:#ecfcbc"></div><div style="position:absolute;left:27.9px;top:27.0px;width:336.6px;height:492.0px;background:#f7f5e6;border-radius:12.0px;overflow:hidden;box-shadow:0 0 6.0px rgba(120,140,60,.4)"><svg style="position:absolute;left:0;top:0" width="336.6" height="492" viewBox="0 0 112.2 164"><path d="M0 128.5Q56 152 112.2 128.5V164H0z" fill="#c6d0a4"/><path d="M0 137.5Q56 161 112.2 138.5V164H0z" fill="#a3b27b"/></svg></div><svg style="position:absolute;left:0;top:0" width="393" height="546" viewBox="0 0 131 182"><rect x="40" y="17.8" width="69.8" height="14.3" rx="1" fill="#7bd135" stroke="#2a5212" stroke-width=".7"/><path d="M25.5 32.6c-5 0-6-6.5-1-8 .3-2.5 2.8-3.8 4.8-2.8 1.7-6 10.7-6 12.2.3 3.5-.5 5.5 2.5 4.5 5 2 1.8 1 5.5-2.5 5.5z" fill="#7bd135" stroke="#2a5212" stroke-width=".7"/><ellipse cx="30.8" cy="23.8" rx="1.5" ry="1.9" fill="#fff" stroke="#222" stroke-width=".35"/><ellipse cx="36" cy="23.8" rx="1.5" ry="1.9" fill="#fff" stroke="#222" stroke-width=".35"/><ellipse cx="31.2" cy="24.1" rx=".8" ry="1.1" fill="#111"/><ellipse cx="36.4" cy="24.1" rx=".8" ry="1.1" fill="#111"/><path d="M31.3 27.8c1.2 1.3 3 1.3 4.2 0" fill="none" stroke="#222" stroke-width=".5"/></svg><div style="position:absolute;left:139.5px;top:55.0px;width:186.0px;font-size:29.4px;line-height:41.2px;white-space:nowrap;font-weight:700;color:#111;text-align:center">标题文字样式</div><div style="position:absolute;left:43.5px;top:109.5px;width:307.5px;height:52.5px;background:#fbfdf5;border-left:1.5px solid #8fd45a;"></div><div style="position:absolute;left:59.4px;top:118.6px;font-size:11.9px;line-height:16.6px;white-space:nowrap;color:#444">这是一段正文文本样式，可用于文本预览效果。这是一</div><div style="position:absolute;left:59.4px;top:137.2px;font-size:11.9px;line-height:16.6px;white-space:nowrap;color:#444">段正文文本样式，可用于文本预览效果。</div><div style="position:absolute;left:43.5px;top:176.8px;font-size:17.4px;line-height:24.4px;white-space:nowrap;font-weight:400;color:#222;letter-spacing:0.9px">小标题样式</div><div style="position:absolute;left:43.5px;top:201.3px;width:64.5px;height:4.2px;background:#2fc14a"></div><svg style="position:absolute;left:108.9px;top:200.4px" width="28.5" height="6.6000000000000005" viewBox="0 0 9.5 2.2" fill="none" stroke="#9a9a9a" stroke-width=".35"><path d="M.3 .2l1.3 .9-1.3 .9M3.3 .2l1.3 .9-1.3 .9M6.3 .2l1.3 .9-1.3 .9"/></svg><div style="position:absolute;left:43.5px;top:213.8px;font-size:11.7px;line-height:16.4px;white-space:nowrap;color:#444">这是一段正文文本样式，可用于文本预览效果。</div><div style="position:absolute;left:43.5px;top:253.9px;font-size:17.4px;line-height:24.4px;white-space:nowrap;font-weight:400;color:#222;letter-spacing:0.9px">小标题样式</div><div style="position:absolute;left:43.5px;top:278.4px;width:64.5px;height:4.2px;background:#2fc14a"></div><svg style="position:absolute;left:108.9px;top:277.5px" width="28.5" height="6.6000000000000005" viewBox="0 0 9.5 2.2" fill="none" stroke="#9a9a9a" stroke-width=".35"><path d="M.3 .2l1.3 .9-1.3 .9M3.3 .2l1.3 .9-1.3 .9M6.3 .2l1.3 .9-1.3 .9"/></svg><div style="position:absolute;left:43.5px;top:290.9px;font-size:11.7px;line-height:16.4px;white-space:nowrap;color:#444">这是一段正文文本样式，可用于文本预览效果。</div><div style="position:absolute;left:43.5px;top:331.0px;font-size:17.4px;line-height:24.4px;white-space:nowrap;font-weight:400;color:#222;letter-spacing:0.9px">小标题样式</div><div style="position:absolute;left:43.5px;top:355.5px;width:64.5px;height:4.2px;background:#2fc14a"></div><svg style="position:absolute;left:108.9px;top:354.6px" width="28.5" height="6.6000000000000005" viewBox="0 0 9.5 2.2" fill="none" stroke="#9a9a9a" stroke-width=".35"><path d="M.3 .2l1.3 .9-1.3 .9M3.3 .2l1.3 .9-1.3 .9M6.3 .2l1.3 .9-1.3 .9"/></svg><div style="position:absolute;left:43.5px;top:368.0px;font-size:11.7px;line-height:16.4px;white-space:nowrap;color:#444">这是一段正文文本样式，可用于文本预览效果。</div><div style="position:absolute;left:43.5px;top:408.1px;font-size:17.4px;line-height:24.4px;white-space:nowrap;font-weight:400;color:#222;letter-spacing:0.9px">小标题样式</div><div style="position:absolute;left:43.5px;top:432.6px;width:64.5px;height:4.2px;background:#2fc14a"></div><svg style="position:absolute;left:108.9px;top:431.7px" width="28.5" height="6.6000000000000005" viewBox="0 0 9.5 2.2" fill="none" stroke="#9a9a9a" stroke-width=".35"><path d="M.3 .2l1.3 .9-1.3 .9M3.3 .2l1.3 .9-1.3 .9M6.3 .2l1.3 .9-1.3 .9"/></svg><div style="position:absolute;left:43.5px;top:445.1px;font-size:11.7px;line-height:16.4px;white-space:nowrap;color:#444">这是一段正文文本样式，可用于文本预览效果。</div></div></div>
  <div class="th" style="left:18px;top:424px"><div class="thi"><div style="position:absolute;left:0.0px;top:0.0px;width:393.0px;height:546.0px;background:#fdeeee"></div><svg style="position:absolute;left:0;top:0" width="393" height="546" viewBox="0 0 131 182"><circle cx="19" cy="0" r="9" fill="#bfe3cf"/><circle cx="79" cy="-1" r="8" fill="#dca79b"/><circle cx="110" cy="25" r="10" fill="#ecd9a8"/><circle cx="-3" cy="28" r="7" fill="#f0e0c0"/><circle cx="0" cy="75" r="10" fill="#a7dbd3"/><circle cx="126" cy="70" r="8" fill="#bfe3cf"/><circle cx="26" cy="55" r="10" fill="#bfe3cf"/><circle cx="70" cy="50" r="8" fill="#a7dbd3"/><circle cx="58" cy="90" r="10" fill="#a7dbd3"/><circle cx="87" cy="89" r="10" fill="#dfb8a4"/><circle cx="117" cy="117" r="9" fill="#dca79b"/><circle cx="22" cy="123" r="10" fill="#ecd9a8"/><circle cx="66" cy="135" r="10" fill="#bfe3cf"/><circle cx="110" cy="158" r="10" fill="#bfe3cf"/><circle cx="28" cy="163" r="9" fill="#dca79b"/><circle cx="86" cy="176" r="8" fill="#dca79b"/><circle cx="50" cy="183" r="7" fill="#ecd9a8"/><circle cx="48" cy="62" r="7" fill="#f3d7d7"/></svg><div style="position:absolute;left:18.9px;top:21.0px;width:355.5px;height:504.0px;border-radius:6.0px;background:linear-gradient(180deg,#ffd3d3,#ffa3a3);box-shadow:0 2.1px 4.5px rgba(200,90,90,.5)"></div><div style="position:absolute;left:34.8px;top:36.9px;width:324.0px;height:472.2px;border-radius:3.6px;background:#fdf0f0;overflow:hidden;box-shadow:inset 0 2.1px 3.0px rgba(150,80,80,.5)"><svg style="position:absolute;left:-34.8px;top:-36.900000000000006px;opacity:.55" width="393" height="546" viewBox="0 0 131 182"><circle cx="19" cy="0" r="9" fill="#bfe3cf"/><circle cx="79" cy="-1" r="8" fill="#dca79b"/><circle cx="110" cy="25" r="10" fill="#ecd9a8"/><circle cx="-3" cy="28" r="7" fill="#f0e0c0"/><circle cx="0" cy="75" r="10" fill="#a7dbd3"/><circle cx="126" cy="70" r="8" fill="#bfe3cf"/><circle cx="26" cy="55" r="10" fill="#bfe3cf"/><circle cx="70" cy="50" r="8" fill="#a7dbd3"/><circle cx="58" cy="90" r="10" fill="#a7dbd3"/><circle cx="87" cy="89" r="10" fill="#dfb8a4"/><circle cx="117" cy="117" r="9" fill="#dca79b"/><circle cx="22" cy="123" r="10" fill="#ecd9a8"/><circle cx="66" cy="135" r="10" fill="#bfe3cf"/><circle cx="110" cy="158" r="10" fill="#bfe3cf"/><circle cx="28" cy="163" r="9" fill="#dca79b"/><circle cx="86" cy="176" r="8" fill="#dca79b"/><circle cx="50" cy="183" r="7" fill="#ecd9a8"/><circle cx="48" cy="62" r="7" fill="#f3d7d7"/></svg></div><div style="position:absolute;left:90.0px;top:69.9px;width:210.0px;height:18.9px;background:#ffc6c6"></div><div style="position:absolute;left:0.0px;top:46.4px;width:393.0px;font-size:31.5px;line-height:44.1px;white-space:nowrap;font-weight:700;text-align:center;color:#111;letter-spacing:1.2px">标题文字样式</div><div style="position:absolute;left:47.7px;top:108.0px;width:300.0px;height:52.5px;background:rgba(255,244,244,.6);border-left:1.5px solid #f29c9c;"></div><div style="position:absolute;left:62.1px;top:117.3px;font-size:12.0px;line-height:16.8px;white-space:nowrap;color:#444">这是一段正文文本样式，可用于文本预览效果。这是一</div><div style="position:absolute;left:62.1px;top:135.0px;font-size:12.0px;line-height:16.8px;white-space:nowrap;color:#444">段正文文本样式，可用于文本预览效果。</div><div style="position:absolute;left:48.0px;top:194.1px;width:132.0px;height:9.6px;background:#dcc0f8"></div><div style="position:absolute;left:60.0px;top:175.6px;font-size:21.3px;line-height:29.8px;white-space:nowrap;font-weight:400;color:#222;letter-spacing:0.9px">小标题样式</div><div style="position:absolute;left:48.0px;top:212.6px;font-size:12.1px;line-height:16.9px;white-space:nowrap;color:#444">这是一段正文文本样式，可用于文本预览效果。</div><div style="position:absolute;left:48.0px;top:281.4px;width:132.0px;height:9.6px;background:#dcc0f8"></div><div style="position:absolute;left:60.0px;top:262.9px;font-size:21.3px;line-height:29.8px;white-space:nowrap;font-weight:400;color:#222;letter-spacing:0.9px">小标题样式</div><div style="position:absolute;left:48.0px;top:299.9px;font-size:12.1px;line-height:16.9px;white-space:nowrap;color:#444">这是一段正文文本样式，可用于文本预览效果。</div><div style="position:absolute;left:48.0px;top:368.7px;width:132.0px;height:9.6px;background:#dcc0f8"></div><div style="position:absolute;left:60.0px;top:350.2px;font-size:21.3px;line-height:29.8px;white-space:nowrap;font-weight:400;color:#222;letter-spacing:0.9px">小标题样式</div><div style="position:absolute;left:48.0px;top:387.2px;font-size:12.1px;line-height:16.9px;white-space:nowrap;color:#444">这是一段正文文本样式，可用于文本预览效果。</div><div style="position:absolute;left:48.0px;top:456.0px;width:132.0px;height:9.6px;background:#dcc0f8"></div><div style="position:absolute;left:60.0px;top:437.5px;font-size:21.3px;line-height:29.8px;white-space:nowrap;font-weight:400;color:#222;letter-spacing:0.9px">小标题样式</div><div style="position:absolute;left:48.0px;top:474.5px;font-size:12.1px;line-height:16.9px;white-space:nowrap;color:#444">这是一段正文文本样式，可用于文本预览效果。</div></div></div>
  <div class="th" style="left:168px;top:424px"><div class="thi"><div style="position:absolute;left:0.0px;top:0.0px;width:393.0px;height:546.0px;background:#fffcc4"></div><svg style="position:absolute;left:0;top:0" width="393" height="546" viewBox="0 0 131 182"><path d="M0 0h48L8 14 0 6z" fill="#fcd3a4"/><path d="M48 0h52l-4 5H47z" fill="#fdd1c8"/><path d="M100 0h31v30l-12 2V5H96z" fill="#fffbc6"/><path d="M100 0h0l-4 5h23v27l12-2" fill="none"/><path d="M0 120h10v62H0z" fill="#ffe999"/><path d="M0 176h76l-2 6H0z" fill="#fde0a0"/><path d="M76 176h55v6H74z" fill="#fdd1c8"/><path d="M131 118c-8 3-11 10-11 18v46h11z" fill="#fdd1c8"/><path d="M119 0h12v30h-12z" fill="#fffbc6"/><path d="M96 0l4 0 0 5z" fill="#fff"/></svg><div style="position:absolute;left:27.0px;top:14.7px;width:336.0px;height:516.3px;background:#fff"></div><div style="position:absolute;left:34.8px;top:21.0px;width:321.3px;height:499.5px;border:2.1px solid #e0a923"></div><svg style="position:absolute;left:0;top:0" width="393" height="546" viewBox="0 0 131 182"><path d="M18 10h94.5a3.5 3.5 0 0 0 3.5 3.5v153.7a3.5 3.5 0 0 0-3.5 3.5H18a3.5 3.5 0 0 0-3.5-3.5V13.5A3.5 3.5 0 0 0 18 10z" fill="none" stroke="#e0a923" stroke-width=".75"/></svg><div style="position:absolute;left:89.4px;top:63.0px;width:210.6px;height:19.5px;background:#ffc83d;border-radius:3.0px"></div><div style="position:absolute;left:0.0px;top:41.4px;width:393.0px;font-size:32.1px;line-height:44.9px;white-space:nowrap;font-weight:700;text-align:center;color:#111;letter-spacing:0.9px">标题文字样式</div><div style="position:absolute;left:57.0px;top:98.4px;width:270.0px;height:51.6px;background:#fff8e2;border-left:1.5px solid #f2cf6b;"></div><div style="position:absolute;left:72.0px;top:105.7px;font-size:11.9px;line-height:16.6px;white-space:nowrap;color:#444">这是一段正文文本样式，可用于文本预览效果。</div><div style="position:absolute;left:72.0px;top:123.7px;font-size:11.9px;line-height:16.6px;white-space:nowrap;color:#444">这是一段正文文本样式，可用于文本预览效果。</div><div style="position:absolute;left:59.1px;top:165.0px;width:99.9px;height:28.2px;border:1.5px solid #e9b93a;background:#fffdf5"></div><div style="position:absolute;left:69.9px;top:168.0px;font-size:15.9px;line-height:22.3px;white-space:nowrap;font-weight:400;color:#222;letter-spacing:0.4px">小标题样式</div><div style="position:absolute;left:59.1px;top:201.1px;font-size:11.9px;line-height:16.6px;white-space:nowrap;color:#444">这是一段正文文本样式，可用于文本预览效果。</div><div style="position:absolute;left:59.1px;top:251.1px;width:99.9px;height:28.2px;border:1.5px solid #e9b93a;background:#fffdf5"></div><div style="position:absolute;left:69.9px;top:254.1px;font-size:15.9px;line-height:22.3px;white-space:nowrap;font-weight:400;color:#222;letter-spacing:0.4px">小标题样式</div><div style="position:absolute;left:59.1px;top:287.2px;font-size:11.9px;line-height:16.6px;white-space:nowrap;color:#444">这是一段正文文本样式，可用于文本预览效果。</div><div style="position:absolute;left:59.1px;top:337.2px;width:99.9px;height:28.2px;border:1.5px solid #e9b93a;background:#fffdf5"></div><div style="position:absolute;left:69.9px;top:340.2px;font-size:15.9px;line-height:22.3px;white-space:nowrap;font-weight:400;color:#222;letter-spacing:0.4px">小标题样式</div><div style="position:absolute;left:59.1px;top:373.3px;font-size:11.9px;line-height:16.6px;white-space:nowrap;color:#444">这是一段正文文本样式，可用于文本预览效果。</div><div style="position:absolute;left:59.1px;top:423.3px;width:99.9px;height:28.2px;border:1.5px solid #e9b93a;background:#fffdf5"></div><div style="position:absolute;left:69.9px;top:426.3px;font-size:15.9px;line-height:22.3px;white-space:nowrap;font-weight:400;color:#222;letter-spacing:0.4px">小标题样式</div><div style="position:absolute;left:59.1px;top:459.4px;font-size:11.9px;line-height:16.6px;white-space:nowrap;color:#444">这是一段正文文本样式，可用于文本预览效果。</div></div></div>
  <div class="th" style="left:18px;top:628px"><div class="thi"><div style="position:absolute;left:0.0px;top:0.0px;width:393.0px;height:546.0px;background:linear-gradient(180deg,#a9dbf1 0%,#c6e4f3 45%,#dcecf6 100%)"></div><svg style="position:absolute;left:0;top:0" width="393" height="546" viewBox="0 0 131 182" opacity=".55"><path d="M0 50l7-12v6L0 56zM0 62l7-12v5L0 67z" fill="#fff"/><path d="M124 70l7-12v8l-7 12zM124 150l7-12v6l-7 12z" fill="#fff"/><path d="M30 0h40l-3 3H28zM80 179h30l-2 3H78z" fill="#fff"/></svg><div style="position:absolute;left:20.4px;top:9.0px;width:352.8px;height:528.0px;background:#fff"></div><svg style="position:absolute;left:0;top:0" width="393" height="546" viewBox="0 0 131 182"><circle cx="13.7" cy="10.3" r="3" fill="#98d0ec"/><circle cx="25.2" cy="10.3" r="3" fill="#b6dcef"/><circle cx="36.7" cy="10.3" r="3" fill="#d3e7f2"/><circle cx="48.2" cy="10.3" r="3" fill="#d3e7f2"/><circle cx="59.7" cy="10.3" r="3" fill="#d8e8f2"/><circle cx="71.2" cy="10.3" r="3" fill="#dbe9f3"/><circle cx="82.7" cy="10.3" r="3" fill="#b6dcef"/><circle cx="94.2" cy="10.3" r="3" fill="#b0daf0"/><circle cx="105.7" cy="10.3" r="3" fill="#b0daf0"/><circle cx="117.2" cy="10.3" r="3" fill="#b0daf0"/></svg><div style="position:absolute;left:88.2px;top:55.5px;width:216.0px;height:43.5px;background:#ffa9b5;border-radius:4.5px"></div><div style="position:absolute;left:88.2px;top:54.4px;width:216.0px;font-size:32.4px;line-height:45.4px;white-space:nowrap;font-weight:700;text-align:center;color:#fff;letter-spacing:0.9px">标题文字样式</div><div style="position:absolute;left:42.6px;top:112.8px;width:307.5px;height:52.8px;background:#fff3f4;border-left:1.5px solid #f8b3bb;"></div><div style="position:absolute;left:54.9px;top:121.5px;font-size:11.6px;line-height:16.3px;white-space:nowrap;color:#444">这是一段正文文本样式，可用于文本预览效果。这是一</div><div style="position:absolute;left:54.9px;top:140.7px;font-size:11.6px;line-height:16.3px;white-space:nowrap;color:#444">段正文文本样式，可用于文本预览效果。</div><svg style="position:absolute;left:42.0px;top:188.1px" width="123" height="13.799999999999999" viewBox="0 0 41 4.6" fill="none" stroke-width=".6"><path d="M.4 .3l1.7 2-1.7 2" stroke="#f58a9a"/><path d="M2.4 .3l1.7 2-1.7 2" stroke="#fbc2ca"/><path d="M38.1 .3l-1.7 2 1.7 2" stroke="#fbc2ca"/><path d="M40.1 .3l-1.7 2 1.7 2" stroke="#f58a9a"/></svg><div style="position:absolute;left:63.0px;top:183.9px;font-size:15.9px;line-height:22.3px;white-space:nowrap;font-weight:400;color:#222">小标题样式</div><div style="position:absolute;left:42.6px;top:213.8px;font-size:9.2px;line-height:12.9px;white-space:nowrap;color:#444">这是一段正文文本样式，可用于文本预览效果。</div><svg style="position:absolute;left:42.0px;top:258.3px" width="123" height="13.799999999999999" viewBox="0 0 41 4.6" fill="none" stroke-width=".6"><path d="M.4 .3l1.7 2-1.7 2" stroke="#f58a9a"/><path d="M2.4 .3l1.7 2-1.7 2" stroke="#fbc2ca"/><path d="M38.1 .3l-1.7 2 1.7 2" stroke="#fbc2ca"/><path d="M40.1 .3l-1.7 2 1.7 2" stroke="#f58a9a"/></svg><div style="position:absolute;left:63.0px;top:254.1px;font-size:15.9px;line-height:22.3px;white-space:nowrap;font-weight:400;color:#222">小标题样式</div><div style="position:absolute;left:42.6px;top:284.0px;font-size:9.2px;line-height:12.9px;white-space:nowrap;color:#444">这是一段正文文本样式，可用于文本预览效果。</div><svg style="position:absolute;left:42.0px;top:328.5px" width="123" height="13.799999999999999" viewBox="0 0 41 4.6" fill="none" stroke-width=".6"><path d="M.4 .3l1.7 2-1.7 2" stroke="#f58a9a"/><path d="M2.4 .3l1.7 2-1.7 2" stroke="#fbc2ca"/><path d="M38.1 .3l-1.7 2 1.7 2" stroke="#fbc2ca"/><path d="M40.1 .3l-1.7 2 1.7 2" stroke="#f58a9a"/></svg><div style="position:absolute;left:63.0px;top:324.3px;font-size:15.9px;line-height:22.3px;white-space:nowrap;font-weight:400;color:#222">小标题样式</div><div style="position:absolute;left:42.6px;top:354.2px;font-size:9.2px;line-height:12.9px;white-space:nowrap;color:#444">这是一段正文文本样式，可用于文本预览效果。</div><svg style="position:absolute;left:42.0px;top:398.7px" width="123" height="13.799999999999999" viewBox="0 0 41 4.6" fill="none" stroke-width=".6"><path d="M.4 .3l1.7 2-1.7 2" stroke="#f58a9a"/><path d="M2.4 .3l1.7 2-1.7 2" stroke="#fbc2ca"/><path d="M38.1 .3l-1.7 2 1.7 2" stroke="#fbc2ca"/><path d="M40.1 .3l-1.7 2 1.7 2" stroke="#f58a9a"/></svg><div style="position:absolute;left:63.0px;top:394.5px;font-size:15.9px;line-height:22.3px;white-space:nowrap;font-weight:400;color:#222">小标题样式</div><div style="position:absolute;left:42.6px;top:424.4px;font-size:9.2px;line-height:12.9px;white-space:nowrap;color:#444">这是一段正文文本样式，可用于文本预览效果。</div><svg style="position:absolute;left:42.0px;top:468.9px" width="123" height="13.799999999999999" viewBox="0 0 41 4.6" fill="none" stroke-width=".6"><path d="M.4 .3l1.7 2-1.7 2" stroke="#f58a9a"/><path d="M2.4 .3l1.7 2-1.7 2" stroke="#fbc2ca"/><path d="M38.1 .3l-1.7 2 1.7 2" stroke="#fbc2ca"/><path d="M40.1 .3l-1.7 2 1.7 2" stroke="#f58a9a"/></svg><div style="position:absolute;left:63.0px;top:464.7px;font-size:15.9px;line-height:22.3px;white-space:nowrap;font-weight:400;color:#222">小标题样式</div><div style="position:absolute;left:42.6px;top:494.6px;font-size:9.2px;line-height:12.9px;white-space:nowrap;color:#444">这是一段正文文本样式，可用于文本预览效果。</div></div></div>
  <div class="th" style="left:168px;top:628px"><div class="thi"><div style="position:absolute;left:0.0px;top:0.0px;width:393.0px;height:546.0px;background:#f3e9e1"></div><div style="position:absolute;left:30.0px;top:16.8px;width:330.0px;height:511.8px;border-radius:16.5px;background:#ffe8c8"></div><div style="position:absolute;left:34.5px;top:21.6px;width:321.0px;height:502.2px;border-radius:13.5px;background:#c9b49c"></div><div style="position:absolute;left:41.1px;top:28.2px;width:307.5px;height:489.0px;border-radius:9.0px;background-color:#fff"></div><svg style="position:absolute;left:41.1px;top:28.2px;border-radius:9.0px" width="307.5" height="489.0" viewBox="0 0 102.5 163"><path d="M2.00 0V163M6.60 0V163M11.20 0V163M15.80 0V163M20.40 0V163M25.00 0V163M29.60 0V163M34.20 0V163M38.80 0V163M43.40 0V163M48.00 0V163M52.60 0V163M57.20 0V163M61.80 0V163M66.40 0V163M71.00 0V163M75.60 0V163M80.20 0V163M84.80 0V163M89.40 0V163M94.00 0V163M98.60 0V163M0 2.00H102.5M0 6.60H102.5M0 11.20H102.5M0 15.80H102.5M0 20.40H102.5M0 25.00H102.5M0 29.60H102.5M0 34.20H102.5M0 38.80H102.5M0 43.40H102.5M0 48.00H102.5M0 52.60H102.5M0 57.20H102.5M0 61.80H102.5M0 66.40H102.5M0 71.00H102.5M0 75.60H102.5M0 80.20H102.5M0 84.80H102.5M0 89.40H102.5M0 94.00H102.5M0 98.60H102.5M0 103.20H102.5M0 107.80H102.5M0 112.40H102.5M0 117.00H102.5M0 121.60H102.5M0 126.20H102.5M0 130.80H102.5M0 135.40H102.5M0 140.00H102.5M0 144.60H102.5M0 149.20H102.5M0 153.80H102.5M0 158.40H102.5M0 163.00H102.5" stroke="#ececec" stroke-width="0.45" fill="none"/></svg><svg style="position:absolute;left:0;top:0" width="393" height="546" viewBox="0 0 131 182"><path d="M45 18.5c15-2.5 35-3 52-2l-2.5 5.5 2.5 6c-17-1.5-36-1-52 1.5z" fill="#fff" stroke="#333" stroke-width=".5"/><path d="M32.5 18l11-3 4.5 14-11 3z" fill="#fbc02d" stroke="#6b4e00" stroke-width=".5"/><path d="M32.5 18l2-1.5 11-3-2 1.5" fill="#fde28a" stroke="#6b4e00" stroke-width=".4"/></svg><div style="position:absolute;left:145.2px;top:52.9px;font-size:21.3px;line-height:29.8px;white-space:nowrap;font-weight:700;color:#111;transform:rotate(-2deg);transform-origin:left center">标题文字样式</div><div style="position:absolute;left:55.5px;top:107.7px;width:276.6px;height:49.2px;background:#fff8e6;border-left:1.5px solid #f5d469;"></div><div style="position:absolute;left:68.1px;top:115.3px;font-size:11.9px;line-height:16.6px;white-space:nowrap;color:#444">这是一段正文文本样式，可用于文本预览效果。</div><div style="position:absolute;left:68.1px;top:133.3px;font-size:11.9px;line-height:16.6px;white-space:nowrap;color:#444">这是一段正文文本样式，可用于文本预览效果。</div><svg style="position:absolute;left:56.4px;top:175.8px" width="16.200000000000003" height="15.600000000000001" viewBox="0 0 5.4 5.2"><path d="M0 0l5.4 2.6L0 5.2l1.6-2.6z" fill="#f6b21b"/></svg><div style="position:absolute;left:83.7px;top:172.7px;font-size:15.6px;line-height:21.8px;white-space:nowrap;font-weight:400;color:#f4b428;letter-spacing:0.3px">小标题样式</div><div style="position:absolute;left:56.4px;top:194.4px;width:119.4px;height:1.5px;background:#f8c64a"></div><div style="position:absolute;left:56.4px;top:193.5px;width:72.0px;height:3.0px;background:#f6b21b"></div><div style="position:absolute;left:56.4px;top:204.6px;font-size:11.9px;line-height:16.7px;white-space:nowrap;color:#444">这是一段正文文本样式，可用于文本预览效果。</div><svg style="position:absolute;left:56.4px;top:260.4px" width="16.200000000000003" height="15.600000000000001" viewBox="0 0 5.4 5.2"><path d="M0 0l5.4 2.6L0 5.2l1.6-2.6z" fill="#f6b21b"/></svg><div style="position:absolute;left:83.7px;top:257.3px;font-size:15.6px;line-height:21.8px;white-space:nowrap;font-weight:400;color:#f4b428;letter-spacing:0.3px">小标题样式</div><div style="position:absolute;left:56.4px;top:279.0px;width:119.4px;height:1.5px;background:#f8c64a"></div><div style="position:absolute;left:56.4px;top:278.1px;width:72.0px;height:3.0px;background:#f6b21b"></div><div style="position:absolute;left:56.4px;top:289.2px;font-size:11.9px;line-height:16.7px;white-space:nowrap;color:#444">这是一段正文文本样式，可用于文本预览效果。</div><svg style="position:absolute;left:56.4px;top:345.0px" width="16.200000000000003" height="15.600000000000001" viewBox="0 0 5.4 5.2"><path d="M0 0l5.4 2.6L0 5.2l1.6-2.6z" fill="#f6b21b"/></svg><div style="position:absolute;left:83.7px;top:341.9px;font-size:15.6px;line-height:21.8px;white-space:nowrap;font-weight:400;color:#f4b428;letter-spacing:0.3px">小标题样式</div><div style="position:absolute;left:56.4px;top:363.6px;width:119.4px;height:1.5px;background:#f8c64a"></div><div style="position:absolute;left:56.4px;top:362.7px;width:72.0px;height:3.0px;background:#f6b21b"></div><div style="position:absolute;left:56.4px;top:373.8px;font-size:11.9px;line-height:16.7px;white-space:nowrap;color:#444">这是一段正文文本样式，可用于文本预览效果。</div><svg style="position:absolute;left:56.4px;top:429.6px" width="16.200000000000003" height="15.600000000000001" viewBox="0 0 5.4 5.2"><path d="M0 0l5.4 2.6L0 5.2l1.6-2.6z" fill="#f6b21b"/></svg><div style="position:absolute;left:83.7px;top:426.5px;font-size:15.6px;line-height:21.8px;white-space:nowrap;font-weight:400;color:#f4b428;letter-spacing:0.3px">小标题样式</div><div style="position:absolute;left:56.4px;top:448.2px;width:119.4px;height:1.5px;background:#f8c64a"></div><div style="position:absolute;left:56.4px;top:447.3px;width:72.0px;height:3.0px;background:#f6b21b"></div><div style="position:absolute;left:56.4px;top:458.4px;font-size:11.9px;line-height:16.7px;white-space:nowrap;color:#444">这是一段正文文本样式，可用于文本预览效果。</div></div></div>
  <div class="th" style="left:18px;top:832px"><div class="thi"><div style="position:absolute;left:0.0px;top:0.0px;width:393.0px;height:546.0px;background:linear-gradient(180deg,#cfe8f9,#d9edf9)"></div><div style="position:absolute;left:27.0px;top:24.0px;width:360.9px;height:506.4px;border-radius:15.0px;background:#5b4a3b"></div><div style="position:absolute;left:30.6px;top:21.9px;width:358.8px;height:504.0px;border-radius:15.0px;background-color:#fdfcf3"></div><svg style="position:absolute;left:30.6px;top:21.9px;border-radius:15.0px" width="358.8" height="504.0" viewBox="0 0 119.6 168"><path d="M1.00 0V168M5.40 0V168M9.80 0V168M14.20 0V168M18.60 0V168M23.00 0V168M27.40 0V168M31.80 0V168M36.20 0V168M40.60 0V168M45.00 0V168M49.40 0V168M53.80 0V168M58.20 0V168M62.60 0V168M67.00 0V168M71.40 0V168M75.80 0V168M80.20 0V168M84.60 0V168M89.00 0V168M93.40 0V168M97.80 0V168M102.20 0V168M106.60 0V168M111.00 0V168M115.40 0V168M0 2.00H119.6M0 6.40H119.6M0 10.80H119.6M0 15.20H119.6M0 19.60H119.6M0 24.00H119.6M0 28.40H119.6M0 32.80H119.6M0 37.20H119.6M0 41.60H119.6M0 46.00H119.6M0 50.40H119.6M0 54.80H119.6M0 59.20H119.6M0 63.60H119.6M0 68.00H119.6M0 72.40H119.6M0 76.80H119.6M0 81.20H119.6M0 85.60H119.6M0 90.00H119.6M0 94.40H119.6M0 98.80H119.6M0 103.20H119.6M0 107.60H119.6M0 112.00H119.6M0 116.40H119.6M0 120.80H119.6M0 125.20H119.6M0 129.60H119.6M0 134.00H119.6M0 138.40H119.6M0 142.80H119.6M0 147.20H119.6M0 151.60H119.6M0 156.00H119.6M0 160.40H119.6M0 164.80H119.6" stroke="#eceadf" stroke-width="0.45" fill="none"/></svg><svg style="position:absolute;left:0;top:0" width="393" height="546" viewBox="0 0 131 182"><g transform="translate(0 25.6)"><path d="M12.5 -5.5C5 -8.5 1.5 -3 2 1.5c.5 4 4.5 6 8 4.5" fill="none" stroke="#8a6a45" stroke-width="2.3"/><path d="M12.5 -5.5C5 -8.5 1.5 -3 2 1.5c.5 4 4.5 6 8 4.5" fill="none" stroke="#f4d9b4" stroke-width="1.4"/><path d="M12 -6.5l5.5 5.5-5 1z" fill="#8a6a45"/><path d="M13 -5l3 3.2-3 .5z" fill="#e8c090"/></g><g transform="translate(0 51.2)"><path d="M12.5 -5.5C5 -8.5 1.5 -3 2 1.5c.5 4 4.5 6 8 4.5" fill="none" stroke="#8a6a45" stroke-width="2.3"/><path d="M12.5 -5.5C5 -8.5 1.5 -3 2 1.5c.5 4 4.5 6 8 4.5" fill="none" stroke="#f4d9b4" stroke-width="1.4"/><path d="M12 -6.5l5.5 5.5-5 1z" fill="#8a6a45"/><path d="M13 -5l3 3.2-3 .5z" fill="#e8c090"/></g><g transform="translate(0 76.9)"><path d="M12.5 -5.5C5 -8.5 1.5 -3 2 1.5c.5 4 4.5 6 8 4.5" fill="none" stroke="#8a6a45" stroke-width="2.3"/><path d="M12.5 -5.5C5 -8.5 1.5 -3 2 1.5c.5 4 4.5 6 8 4.5" fill="none" stroke="#f4d9b4" stroke-width="1.4"/><path d="M12 -6.5l5.5 5.5-5 1z" fill="#8a6a45"/><path d="M13 -5l3 3.2-3 .5z" fill="#e8c090"/></g><g transform="translate(0 102.5)"><path d="M12.5 -5.5C5 -8.5 1.5 -3 2 1.5c.5 4 4.5 6 8 4.5" fill="none" stroke="#8a6a45" stroke-width="2.3"/><path d="M12.5 -5.5C5 -8.5 1.5 -3 2 1.5c.5 4 4.5 6 8 4.5" fill="none" stroke="#f4d9b4" stroke-width="1.4"/><path d="M12 -6.5l5.5 5.5-5 1z" fill="#8a6a45"/><path d="M13 -5l3 3.2-3 .5z" fill="#e8c090"/></g><g transform="translate(0 128.2)"><path d="M12.5 -5.5C5 -8.5 1.5 -3 2 1.5c.5 4 4.5 6 8 4.5" fill="none" stroke="#8a6a45" stroke-width="2.3"/><path d="M12.5 -5.5C5 -8.5 1.5 -3 2 1.5c.5 4 4.5 6 8 4.5" fill="none" stroke="#f4d9b4" stroke-width="1.4"/><path d="M12 -6.5l5.5 5.5-5 1z" fill="#8a6a45"/><path d="M13 -5l3 3.2-3 .5z" fill="#e8c090"/></g><g transform="translate(0 153.8)"><path d="M12.5 -5.5C5 -8.5 1.5 -3 2 1.5c.5 4 4.5 6 8 4.5" fill="none" stroke="#8a6a45" stroke-width="2.3"/><path d="M12.5 -5.5C5 -8.5 1.5 -3 2 1.5c.5 4 4.5 6 8 4.5" fill="none" stroke="#f4d9b4" stroke-width="1.4"/><path d="M12 -6.5l5.5 5.5-5 1z" fill="#8a6a45"/><path d="M13 -5l3 3.2-3 .5z" fill="#e8c090"/></g><rect x="28" y="12.5" width="84.3" height="15.7" rx="2.5" fill="#fff" stroke="#222" stroke-width=".6" stroke-dasharray="1.4 .9"/></svg><div style="position:absolute;left:84.0px;top:39.1px;width:252.9px;font-size:31.2px;line-height:43.7px;white-space:nowrap;font-weight:700;text-align:center;color:#111;letter-spacing:1.2px">标题文字样式</div><div style="position:absolute;left:65.7px;top:92.4px;width:311.1px;height:54.6px;background:#eff5fd;border-left:1.5px solid #5b8def;"></div><div style="position:absolute;left:80.4px;top:103.6px;font-size:11.9px;line-height:16.6px;white-space:nowrap;color:#444">这是一段正文文本样式，可用于文本预览效果。这是一</div><div style="position:absolute;left:80.4px;top:121.3px;font-size:11.9px;line-height:16.6px;white-space:nowrap;color:#444">段正文文本样式，可用于文本预览效果。</div><div style="position:absolute;left:69.0px;top:165.3px;width:112.8px;height:25.5px;background:#a9adb5"></div><div style="position:absolute;left:65.7px;top:162.6px;width:112.8px;height:25.5px;background:#4a7df0"></div><div style="position:absolute;left:65.7px;top:163.9px;width:112.8px;font-size:16.2px;line-height:22.7px;white-space:nowrap;font-weight:500;color:#fff;text-align:center">小标题样式</div><div style="position:absolute;left:65.7px;top:199.1px;font-size:12.1px;line-height:17.0px;white-space:nowrap;color:#444">这是一段正文文本样式，可用于文本预览效果。</div><div style="position:absolute;left:69.0px;top:251.7px;width:112.8px;height:25.5px;background:#a9adb5"></div><div style="position:absolute;left:65.7px;top:249.0px;width:112.8px;height:25.5px;background:#4a7df0"></div><div style="position:absolute;left:65.7px;top:250.3px;width:112.8px;font-size:16.2px;line-height:22.7px;white-space:nowrap;font-weight:500;color:#fff;text-align:center">小标题样式</div><div style="position:absolute;left:65.7px;top:285.5px;font-size:12.1px;line-height:17.0px;white-space:nowrap;color:#444">这是一段正文文本样式，可用于文本预览效果。</div><div style="position:absolute;left:69.0px;top:338.1px;width:112.8px;height:25.5px;background:#a9adb5"></div><div style="position:absolute;left:65.7px;top:335.4px;width:112.8px;height:25.5px;background:#4a7df0"></div><div style="position:absolute;left:65.7px;top:336.7px;width:112.8px;font-size:16.2px;line-height:22.7px;white-space:nowrap;font-weight:500;color:#fff;text-align:center">小标题样式</div><div style="position:absolute;left:65.7px;top:371.9px;font-size:12.1px;line-height:17.0px;white-space:nowrap;color:#444">这是一段正文文本样式，可用于文本预览效果。</div><div style="position:absolute;left:69.0px;top:424.5px;width:112.8px;height:25.5px;background:#a9adb5"></div><div style="position:absolute;left:65.7px;top:421.8px;width:112.8px;height:25.5px;background:#4a7df0"></div><div style="position:absolute;left:65.7px;top:423.1px;width:112.8px;font-size:16.2px;line-height:22.7px;white-space:nowrap;font-weight:500;color:#fff;text-align:center">小标题样式</div><div style="position:absolute;left:65.7px;top:458.3px;font-size:12.1px;line-height:17.0px;white-space:nowrap;color:#444">这是一段正文文本样式，可用于文本预览效果。</div></div></div>
  <div class="th" style="left:168px;top:832px"><div class="thi"><div style="position:absolute;left:0.0px;top:0.0px;width:393.0px;height:546.0px;background:#eef6ee"></div><svg style="position:absolute;left:0;top:0" width="393" height="546" viewBox="0 0 131 182"><ellipse cx="28" cy="4" rx="18" ry="4.5" fill="#fff"/><ellipse cx="70" cy="178" rx="20" ry="3" fill="#fff" opacity=".8"/></svg><div style="position:absolute;left:16.8px;top:20.4px;width:355.2px;height:507.0px;background:#e2eed2;border-radius:4.5px"></div><div style="position:absolute;left:27.0px;top:30.9px;width:336.0px;height:486.0px;background:#fdfdf3"></div><svg style="position:absolute;left:0;top:0" width="393" height="546" viewBox="0 0 131 182"><ellipse cx="65" cy="26.5" rx="40" ry="3.8" fill="#f3e38a"/><ellipse cx="65" cy="27.8" rx="32" ry="2" fill="#d8c56a" opacity=".6"/></svg><div style="position:absolute;left:0.0px;top:45.4px;width:393.0px;font-size:32.4px;line-height:45.4px;white-space:nowrap;font-weight:700;text-align:center;color:#f6e88a;-webkit-text-stroke:0.8px #6b6228;letter-spacing:1.2px">标题文字样式</div><div style="position:absolute;left:41.1px;top:104.1px;width:306.6px;height:51.9px;background:#fff6e1;border-left:1.5px solid #f7dc93;"></div><div style="position:absolute;left:55.5px;top:113.2px;font-size:11.9px;line-height:16.6px;white-space:nowrap;color:#444">这是一段正文文本样式，可用于文本预览效果。这是一</div><div style="position:absolute;left:55.5px;top:131.8px;font-size:11.9px;line-height:16.6px;white-space:nowrap;color:#444">段正文文本样式，可用于文本预览效果。</div><svg style="position:absolute;left:41.1px;top:175.2px" width="141" height="27.599999999999998" viewBox="0 0 47 9.2"><path d="M4 0h43l-3 9.2H1.5z" fill="#fde392"/><path d="M0 5.5h2.5V3.8h2.3V2.2H8v3.3H6.5v1.7H8v2H0z" fill="#e3aa07"/></svg><div style="position:absolute;left:75.9px;top:177.7px;font-size:16.2px;line-height:22.7px;white-space:nowrap;font-weight:500;color:#f2b92f">小标题样式</div><div style="position:absolute;left:41.1px;top:211.1px;font-size:12.1px;line-height:17.0px;white-space:nowrap;color:#444">这是一段正文文本样式，可用于文本预览效果。</div><svg style="position:absolute;left:41.1px;top:264.3px" width="141" height="27.599999999999998" viewBox="0 0 47 9.2"><path d="M4 0h43l-3 9.2H1.5z" fill="#fde392"/><path d="M0 5.5h2.5V3.8h2.3V2.2H8v3.3H6.5v1.7H8v2H0z" fill="#e3aa07"/></svg><div style="position:absolute;left:75.9px;top:266.8px;font-size:16.2px;line-height:22.7px;white-space:nowrap;font-weight:500;color:#f2b92f">小标题样式</div><div style="position:absolute;left:41.1px;top:300.2px;font-size:12.1px;line-height:17.0px;white-space:nowrap;color:#444">这是一段正文文本样式，可用于文本预览效果。</div><svg style="position:absolute;left:41.1px;top:353.4px" width="141" height="27.599999999999998" viewBox="0 0 47 9.2"><path d="M4 0h43l-3 9.2H1.5z" fill="#fde392"/><path d="M0 5.5h2.5V3.8h2.3V2.2H8v3.3H6.5v1.7H8v2H0z" fill="#e3aa07"/></svg><div style="position:absolute;left:75.9px;top:355.9px;font-size:16.2px;line-height:22.7px;white-space:nowrap;font-weight:500;color:#f2b92f">小标题样式</div><div style="position:absolute;left:41.1px;top:389.3px;font-size:12.1px;line-height:17.0px;white-space:nowrap;color:#444">这是一段正文文本样式，可用于文本预览效果。</div><svg style="position:absolute;left:41.1px;top:442.5px" width="141" height="27.599999999999998" viewBox="0 0 47 9.2"><path d="M4 0h43l-3 9.2H1.5z" fill="#fde392"/><path d="M0 5.5h2.5V3.8h2.3V2.2H8v3.3H6.5v1.7H8v2H0z" fill="#e3aa07"/></svg><div style="position:absolute;left:75.9px;top:445.0px;font-size:16.2px;line-height:22.7px;white-space:nowrap;font-weight:500;color:#f2b92f">小标题样式</div><div style="position:absolute;left:41.1px;top:478.4px;font-size:12.1px;line-height:17.0px;white-space:nowrap;color:#444">这是一段正文文本样式，可用于文本预览效果。</div></div></div>
  <div class="abs" style="left:15px;top:1032px;width:138px;height:200px;border:3px solid #8a4fee;border-radius:7px 7px 0 0;border-bottom:0"></div><div class="th" style="left:18px;top:1035px"><div class="thi"><div style="position:absolute;left:0.0px;top:0.0px;width:393.0px;height:546.0px;background:repeating-linear-gradient(119.180deg,#ffe5dc 0,#ffe5dc 9.6px,#ffcdc8 9.6px,#ffcdc8 54.0px,#ffe5dc 54.0px,#ffe5dc 88.8px)"></div><div style="position:absolute;left:27.9px;top:21.9px;width:337.2px;height:36.0px;background:#febebe;border-radius:7.5px 7.5px 0 0"></div><div style="position:absolute;left:27.9px;top:50.1px;width:337.2px;height:510.0px;background-color:#fff"></div><svg style="position:absolute;left:27.9px;top:50.1px;border-radius:0.0px" width="337.2" height="510.0" viewBox="0 0 112.4 170"><path d="M2.40 0V170M7.20 0V170M12.00 0V170M16.80 0V170M21.60 0V170M26.40 0V170M31.20 0V170M36.00 0V170M40.80 0V170M45.60 0V170M50.40 0V170M55.20 0V170M60.00 0V170M64.80 0V170M69.60 0V170M74.40 0V170M79.20 0V170M84.00 0V170M88.80 0V170M93.60 0V170M98.40 0V170M103.20 0V170M108.00 0V170M0 2.20H112.4M0 7.00H112.4M0 11.80H112.4M0 16.60H112.4M0 21.40H112.4M0 26.20H112.4M0 31.00H112.4M0 35.80H112.4M0 40.60H112.4M0 45.40H112.4M0 50.20H112.4M0 55.00H112.4M0 59.80H112.4M0 64.60H112.4M0 69.40H112.4M0 74.20H112.4M0 79.00H112.4M0 83.80H112.4M0 88.60H112.4M0 93.40H112.4M0 98.20H112.4M0 103.00H112.4M0 107.80H112.4M0 112.60H112.4M0 117.40H112.4M0 122.20H112.4M0 127.00H112.4M0 131.80H112.4M0 136.60H112.4M0 141.40H112.4M0 146.20H112.4M0 151.00H112.4M0 155.80H112.4M0 160.60H112.4M0 165.40H112.4" stroke="#e6e6e6" stroke-width="0.45" fill="none"/></svg><svg style="position:absolute;left:0;top:0" width="393" height="546" viewBox="0 0 131 182"><g transform="translate(17.0 0)"><path d="M1.2 7.2C1.1 5.6.7 4.6 0 4.6c-.9 0-1.5 1.2-1.5 2.7 0 1.1.3 2 .8 2.6" fill="none" stroke="#ff9500" stroke-width=".45"/><circle cx="0" cy="10.8" r="1.150" fill="#8b0d0d" stroke="#ff9500" stroke-width=".4"/></g><g transform="translate(26.6 0)"><path d="M1.2 7.2C1.1 5.6.7 4.6 0 4.6c-.9 0-1.5 1.2-1.5 2.7 0 1.1.3 2 .8 2.6" fill="none" stroke="#ff9500" stroke-width=".45"/><circle cx="0" cy="10.8" r="1.150" fill="#8b0d0d" stroke="#ff9500" stroke-width=".4"/></g><g transform="translate(36.2 0)"><path d="M1.2 7.2C1.1 5.6.7 4.6 0 4.6c-.9 0-1.5 1.2-1.5 2.7 0 1.1.3 2 .8 2.6" fill="none" stroke="#ff9500" stroke-width=".45"/><circle cx="0" cy="10.8" r="1.150" fill="#8b0d0d" stroke="#ff9500" stroke-width=".4"/></g><g transform="translate(45.8 0)"><path d="M1.2 7.2C1.1 5.6.7 4.6 0 4.6c-.9 0-1.5 1.2-1.5 2.7 0 1.1.3 2 .8 2.6" fill="none" stroke="#ff9500" stroke-width=".45"/><circle cx="0" cy="10.8" r="1.150" fill="#8b0d0d" stroke="#ff9500" stroke-width=".4"/></g><g transform="translate(55.4 0)"><path d="M1.2 7.2C1.1 5.6.7 4.6 0 4.6c-.9 0-1.5 1.2-1.5 2.7 0 1.1.3 2 .8 2.6" fill="none" stroke="#ff9500" stroke-width=".45"/><circle cx="0" cy="10.8" r="1.150" fill="#8b0d0d" stroke="#ff9500" stroke-width=".4"/></g><g transform="translate(65.0 0)"><path d="M1.2 7.2C1.1 5.6.7 4.6 0 4.6c-.9 0-1.5 1.2-1.5 2.7 0 1.1.3 2 .8 2.6" fill="none" stroke="#ff9500" stroke-width=".45"/><circle cx="0" cy="10.8" r="1.150" fill="#8b0d0d" stroke="#ff9500" stroke-width=".4"/></g><g transform="translate(74.6 0)"><path d="M1.2 7.2C1.1 5.6.7 4.6 0 4.6c-.9 0-1.5 1.2-1.5 2.7 0 1.1.3 2 .8 2.6" fill="none" stroke="#ff9500" stroke-width=".45"/><circle cx="0" cy="10.8" r="1.150" fill="#8b0d0d" stroke="#ff9500" stroke-width=".4"/></g><g transform="translate(84.2 0)"><path d="M1.2 7.2C1.1 5.6.7 4.6 0 4.6c-.9 0-1.5 1.2-1.5 2.7 0 1.1.3 2 .8 2.6" fill="none" stroke="#ff9500" stroke-width=".45"/><circle cx="0" cy="10.8" r="1.150" fill="#8b0d0d" stroke="#ff9500" stroke-width=".4"/></g><g transform="translate(93.8 0)"><path d="M1.2 7.2C1.1 5.6.7 4.6 0 4.6c-.9 0-1.5 1.2-1.5 2.7 0 1.1.3 2 .8 2.6" fill="none" stroke="#ff9500" stroke-width=".45"/><circle cx="0" cy="10.8" r="1.150" fill="#8b0d0d" stroke="#ff9500" stroke-width=".4"/></g><g transform="translate(103.4 0)"><path d="M1.2 7.2C1.1 5.6.7 4.6 0 4.6c-.9 0-1.5 1.2-1.5 2.7 0 1.1.3 2 .8 2.6" fill="none" stroke="#ff9500" stroke-width=".45"/><circle cx="0" cy="10.8" r="1.150" fill="#8b0d0d" stroke="#ff9500" stroke-width=".4"/></g><g transform="translate(113.0 0)"><path d="M1.2 7.2C1.1 5.6.7 4.6 0 4.6c-.9 0-1.5 1.2-1.5 2.7 0 1.1.3 2 .8 2.6" fill="none" stroke="#ff9500" stroke-width=".45"/><circle cx="0" cy="10.8" r="1.150" fill="#8b0d0d" stroke="#ff9500" stroke-width=".4"/></g><path d="M32 22h66.5a2 2 0 0 1 2 2v10.5H32z" fill="#c98f8f"/><path d="M31 21h66.5a2 2 0 0 1 2 2v7.5l-3.5 3.5H31z" fill="#fff" stroke="#444" stroke-width=".45"/><path d="M96 34l3.5-3.5H96z" fill="#f7b9b9"/></svg><div style="position:absolute;left:93.0px;top:62.4px;width:198.0px;font-size:30.0px;line-height:42.0px;white-space:nowrap;font-weight:700;text-align:center;color:#111">标题文字样式</div><div style="position:absolute;left:42.9px;top:122.4px;width:307.2px;height:50.1px;background:#ffefef;"></div><div style="position:absolute;left:57.0px;top:132.1px;font-size:11.9px;line-height:16.6px;white-space:nowrap;color:#444">这是一段正文文本样式，可用于文本预览效果。这是一</div><div style="position:absolute;left:57.0px;top:148.9px;font-size:11.9px;line-height:16.6px;white-space:nowrap;color:#444">段正文文本样式，可用于文本预览效果。</div><div style="position:absolute;left:132.0px;top:209.4px;width:25.5px;height:9.0px;background:#c5c5c5"></div><div style="position:absolute;left:42.9px;top:189.9px;width:112.2px;height:26.1px;background:#ffb9b9"></div><div style="position:absolute;left:42.9px;top:191.5px;width:112.2px;font-size:16.2px;line-height:22.7px;white-space:nowrap;font-weight:500;color:#fff;text-align:center">小标题样式</div><div style="position:absolute;left:42.9px;top:227.3px;font-size:12.1px;line-height:17.0px;white-space:nowrap;color:#444">这是一段正文文本样式，可用于文本预览效果。</div><div style="position:absolute;left:132.0px;top:295.8px;width:25.5px;height:9.0px;background:#c5c5c5"></div><div style="position:absolute;left:42.9px;top:276.3px;width:112.2px;height:26.1px;background:#ffb9b9"></div><div style="position:absolute;left:42.9px;top:277.9px;width:112.2px;font-size:16.2px;line-height:22.7px;white-space:nowrap;font-weight:500;color:#fff;text-align:center">小标题样式</div><div style="position:absolute;left:42.9px;top:313.7px;font-size:12.1px;line-height:17.0px;white-space:nowrap;color:#444">这是一段正文文本样式，可用于文本预览效果。</div><div style="position:absolute;left:132.0px;top:382.2px;width:25.5px;height:9.0px;background:#c5c5c5"></div><div style="position:absolute;left:42.9px;top:362.7px;width:112.2px;height:26.1px;background:#ffb9b9"></div><div style="position:absolute;left:42.9px;top:364.3px;width:112.2px;font-size:16.2px;line-height:22.7px;white-space:nowrap;font-weight:500;color:#fff;text-align:center">小标题样式</div><div style="position:absolute;left:42.9px;top:400.1px;font-size:12.1px;line-height:17.0px;white-space:nowrap;color:#444">这是一段正文文本样式，可用于文本预览效果。</div><div style="position:absolute;left:132.0px;top:468.6px;width:25.5px;height:9.0px;background:#c5c5c5"></div><div style="position:absolute;left:42.9px;top:449.1px;width:112.2px;height:26.1px;background:#ffb9b9"></div><div style="position:absolute;left:42.9px;top:450.7px;width:112.2px;font-size:16.2px;line-height:22.7px;white-space:nowrap;font-weight:500;color:#fff;text-align:center">小标题样式</div><div style="position:absolute;left:42.9px;top:486.5px;font-size:12.1px;line-height:17.0px;white-space:nowrap;color:#444">这是一段正文文本样式，可用于文本预览效果。</div><div style="position:absolute;left:132.0px;top:555.0px;width:25.5px;height:9.0px;background:#c5c5c5"></div><div style="position:absolute;left:42.9px;top:535.5px;width:112.2px;height:26.1px;background:#ffb9b9"></div><div style="position:absolute;left:42.9px;top:537.1px;width:112.2px;font-size:16.2px;line-height:22.7px;white-space:nowrap;font-weight:500;color:#fff;text-align:center">小标题样式</div><div style="position:absolute;left:42.9px;top:572.9px;font-size:12.1px;line-height:17.0px;white-space:nowrap;color:#444">这是一段正文文本样式，可用于文本预览效果。</div></div></div>
  <div class="th" style="left:168px;top:1036px"><div class="thi"><div style="position:absolute;left:0.0px;top:0.0px;width:393.0px;height:546.0px;background:linear-gradient(180deg,#cbe6f7,#d6ecf8)"></div><div style="position:absolute;left:20.4px;top:23.4px;width:337.5px;height:540.0px;background:#e3f1f8"></div><div style="position:absolute;left:28.8px;top:34.2px;width:339.3px;height:540.0px;background-color:#fffaec"></div><svg style="position:absolute;left:28.8px;top:34.2px;border-radius:0.0px" width="339.3" height="540.0" viewBox="0 0 113.1 180"><path d="M2.50 0V180M7.70 0V180M12.90 0V180M18.10 0V180M23.30 0V180M28.50 0V180M33.70 0V180M38.90 0V180M44.10 0V180M49.30 0V180M54.50 0V180M59.70 0V180M64.90 0V180M70.10 0V180M75.30 0V180M80.50 0V180M85.70 0V180M90.90 0V180M96.10 0V180M101.30 0V180M106.50 0V180M111.70 0V180M0 2.00H113.1M0 7.20H113.1M0 12.40H113.1M0 17.60H113.1M0 22.80H113.1M0 28.00H113.1M0 33.20H113.1M0 38.40H113.1M0 43.60H113.1M0 48.80H113.1M0 54.00H113.1M0 59.20H113.1M0 64.40H113.1M0 69.60H113.1M0 74.80H113.1M0 80.00H113.1M0 85.20H113.1M0 90.40H113.1M0 95.60H113.1M0 100.80H113.1M0 106.00H113.1M0 111.20H113.1M0 116.40H113.1M0 121.60H113.1M0 126.80H113.1M0 132.00H113.1M0 137.20H113.1M0 142.40H113.1M0 147.60H113.1M0 152.80H113.1M0 158.00H113.1M0 163.20H113.1M0 168.40H113.1M0 173.60H113.1M0 178.80H113.1" stroke="#f3e6d0" stroke-width="0.4" fill="none"/></svg><svg style="position:absolute;left:0;top:0" width="393" height="546" viewBox="0 0 131 182"><rect x="27" y="16" width="78.4" height="15.5" rx="7.7" fill="#fff" stroke="#333" stroke-width=".75"/><rect x="28.3" y="17.3" width="75.8" height="12.9" rx="6.4" fill="none" stroke="#888" stroke-width=".3"/></svg><div style="position:absolute;left:81.0px;top:51.8px;width:235.2px;font-size:28.8px;line-height:40.3px;white-space:nowrap;font-weight:700;text-align:center;color:#111;letter-spacing:0.9px">标题文字样式</div><div style="position:absolute;left:45.0px;top:108.0px;width:311.1px;height:52.2px;background:#f3f8fd;"></div><div style="position:absolute;left:58.8px;top:117.1px;font-size:11.9px;line-height:16.6px;white-space:nowrap;color:#444">这是一段正文文本样式，可用于文本预览效果。这是一</div><div style="position:absolute;left:58.8px;top:134.5px;font-size:11.9px;line-height:16.6px;white-space:nowrap;color:#444">段正文文本样式，可用于文本预览效果。</div><div style="position:absolute;left:46.2px;top:180.0px;width:100.8px;height:27.0px;border:1.4px solid #333;background:#fffdf6"></div><svg style="position:absolute;left:43.8px;top:177.6px" width="105.60000000000001" height="31.799999999999997" viewBox="0 0 35.2 10.6"><path d="M.8 0v2M0 .8h2M34.4 0v2M33.2 .8h2M.8 8.6v2M0 9.8h2M34.4 8.6v2M33.2 9.8h2" stroke="#333" stroke-width=".4"/></svg><div style="position:absolute;left:46.2px;top:182.2px;width:100.8px;font-size:16.2px;line-height:22.7px;white-space:nowrap;font-weight:400;color:#222;text-align:center">小标题样式</div><div style="position:absolute;left:48.6px;top:216.2px;font-size:12.1px;line-height:17.0px;white-space:nowrap;color:#444">这是一段正文文本样式，可用于文本预览效果。</div><div style="position:absolute;left:46.2px;top:266.4px;width:100.8px;height:27.0px;border:1.4px solid #333;background:#fffdf6"></div><svg style="position:absolute;left:43.8px;top:264.0px" width="105.60000000000001" height="31.799999999999997" viewBox="0 0 35.2 10.6"><path d="M.8 0v2M0 .8h2M34.4 0v2M33.2 .8h2M.8 8.6v2M0 9.8h2M34.4 8.6v2M33.2 9.8h2" stroke="#333" stroke-width=".4"/></svg><div style="position:absolute;left:46.2px;top:268.6px;width:100.8px;font-size:16.2px;line-height:22.7px;white-space:nowrap;font-weight:400;color:#222;text-align:center">小标题样式</div><div style="position:absolute;left:48.6px;top:302.6px;font-size:12.1px;line-height:17.0px;white-space:nowrap;color:#444">这是一段正文文本样式，可用于文本预览效果。</div><div style="position:absolute;left:46.2px;top:352.8px;width:100.8px;height:27.0px;border:1.4px solid #333;background:#fffdf6"></div><svg style="position:absolute;left:43.8px;top:350.4px" width="105.60000000000001" height="31.799999999999997" viewBox="0 0 35.2 10.6"><path d="M.8 0v2M0 .8h2M34.4 0v2M33.2 .8h2M.8 8.6v2M0 9.8h2M34.4 8.6v2M33.2 9.8h2" stroke="#333" stroke-width=".4"/></svg><div style="position:absolute;left:46.2px;top:355.0px;width:100.8px;font-size:16.2px;line-height:22.7px;white-space:nowrap;font-weight:400;color:#222;text-align:center">小标题样式</div><div style="position:absolute;left:48.6px;top:389.0px;font-size:12.1px;line-height:17.0px;white-space:nowrap;color:#444">这是一段正文文本样式，可用于文本预览效果。</div><div style="position:absolute;left:46.2px;top:439.2px;width:100.8px;height:27.0px;border:1.4px solid #333;background:#fffdf6"></div><svg style="position:absolute;left:43.8px;top:436.8px" width="105.60000000000001" height="31.799999999999997" viewBox="0 0 35.2 10.6"><path d="M.8 0v2M0 .8h2M34.4 0v2M33.2 .8h2M.8 8.6v2M0 9.8h2M34.4 8.6v2M33.2 9.8h2" stroke="#333" stroke-width=".4"/></svg><div style="position:absolute;left:46.2px;top:441.4px;width:100.8px;font-size:16.2px;line-height:22.7px;white-space:nowrap;font-weight:400;color:#222;text-align:center">小标题样式</div><div style="position:absolute;left:48.6px;top:475.4px;font-size:12.1px;line-height:17.0px;white-space:nowrap;color:#444">这是一段正文文本样式，可用于文本预览效果。</div><div style="position:absolute;left:46.2px;top:525.6px;width:100.8px;height:27.0px;border:1.4px solid #333;background:#fffdf6"></div><svg style="position:absolute;left:43.8px;top:523.2px" width="105.60000000000001" height="31.799999999999997" viewBox="0 0 35.2 10.6"><path d="M.8 0v2M0 .8h2M34.4 0v2M33.2 .8h2M.8 8.6v2M0 9.8h2M34.4 8.6v2M33.2 9.8h2" stroke="#333" stroke-width=".4"/></svg><div style="position:absolute;left:46.2px;top:527.8px;width:100.8px;font-size:16.2px;line-height:22.7px;white-space:nowrap;font-weight:400;color:#222;text-align:center">小标题样式</div><div style="position:absolute;left:48.6px;top:561.8px;font-size:12.1px;line-height:17.0px;white-space:nowrap;color:#444">这是一段正文文本样式，可用于文本预览效果。</div></div></div>
  <div class="abs" style="left:317px;top:135px;width:7px;height:561px;border-radius:3.5px;background:#8c8c8c"></div>
</div><!--/rp-->
<div id="winframe" style="position:absolute;left:0;top:0;width:1900px;height:1229px;border-radius:10px;border:1px solid rgba(170,170,170,.32);box-shadow:0 0 0 14px #fff;z-index:100;pointer-events:none"></div>
</body>
</html>
